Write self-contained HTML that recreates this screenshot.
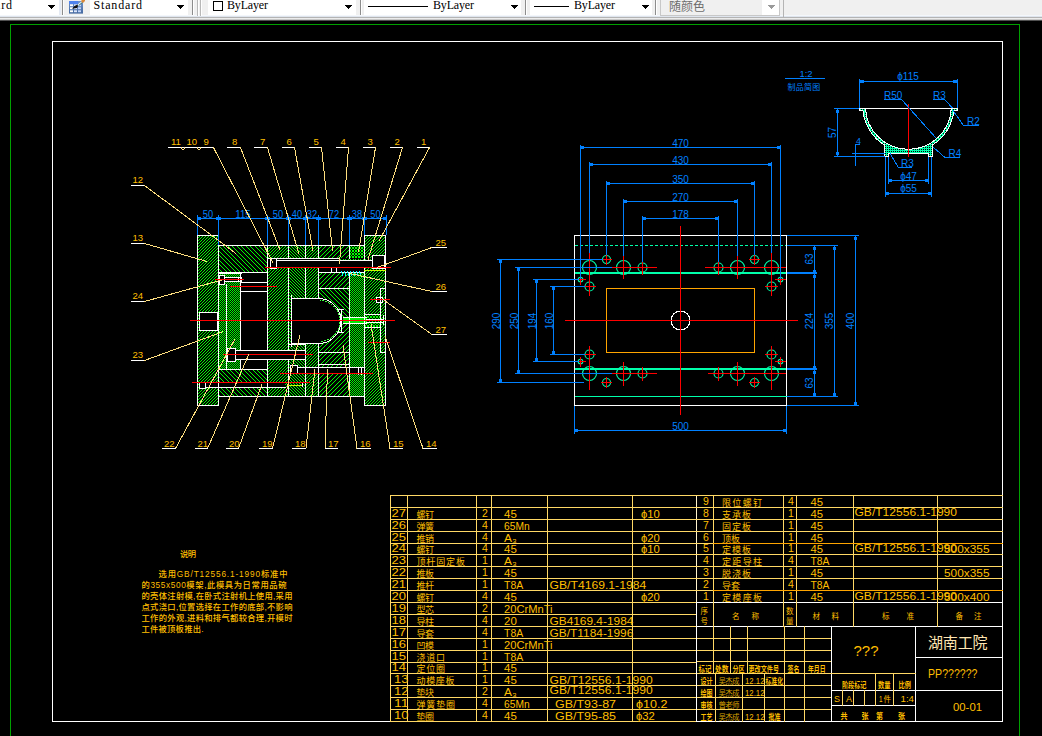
<!DOCTYPE html>
<html><head><meta charset="utf-8"><title>CAD</title>
<style>html,body{margin:0;padding:0;background:#000;overflow:hidden}svg{display:block}text{white-space:pre}</style>
</head><body>
<svg width="1042" height="736" viewBox="0 0 1042 736" shape-rendering="crispEdges">
<rect x="0" y="0" width="1042" height="736" fill="#000"/>
<defs>
<clipPath id="cavclip"><path d="M318 272 H349.5 V396 H318 V343.5 A22.5 22.5 0 0 0 318 298.5 Z"/></clipPath>
<clipPath id="bowlclip"><path id="bowlshape" d="M859.5 108.5 H865.5 A43 43 0 0 0 908.4 149.3 A43 43 0 0 0 951.3 108.5 H957.5 V110.5 H953.8 A45.6 45.6 0 0 1 932 145.3 V156.5 H928 V153.8 H888.8 V156.5 H884.8 V145.3 A45.6 45.6 0 0 1 863 110.5 H859.5 Z"/></clipPath>
<pattern id="F3" patternUnits="userSpaceOnUse" x="0" y="0" width="3" height="3"><rect x="0" y="0" width="1" height="1" fill="#00ff00"/><rect x="1" y="2" width="1" height="1" fill="#00ff00"/><rect x="2" y="1" width="1" height="1" fill="#00ff00"/></pattern>
<pattern id="B3" patternUnits="userSpaceOnUse" x="0" y="0" width="3" height="3"><rect x="0" y="0" width="1" height="1" fill="#00ff00"/><rect x="1" y="1" width="1" height="1" fill="#00ff00"/><rect x="2" y="2" width="1" height="1" fill="#00ff00"/></pattern>
<pattern id="F45" patternUnits="userSpaceOnUse" x="0" y="0" width="9" height="9"><rect x="0" y="0" width="1" height="1" fill="#00ff00"/><rect x="0" y="4" width="1" height="1" fill="#00ff00"/><rect x="1" y="3" width="1" height="1" fill="#00ff00"/><rect x="1" y="8" width="1" height="1" fill="#00ff00"/><rect x="2" y="2" width="1" height="1" fill="#00ff00"/><rect x="2" y="7" width="1" height="1" fill="#00ff00"/><rect x="3" y="1" width="1" height="1" fill="#00ff00"/><rect x="3" y="6" width="1" height="1" fill="#00ff00"/><rect x="4" y="0" width="1" height="1" fill="#00ff00"/><rect x="4" y="5" width="1" height="1" fill="#00ff00"/><rect x="5" y="4" width="1" height="1" fill="#00ff00"/><rect x="5" y="8" width="1" height="1" fill="#00ff00"/><rect x="6" y="3" width="1" height="1" fill="#00ff00"/><rect x="6" y="7" width="1" height="1" fill="#00ff00"/><rect x="7" y="2" width="1" height="1" fill="#00ff00"/><rect x="7" y="6" width="1" height="1" fill="#00ff00"/><rect x="8" y="1" width="1" height="1" fill="#00ff00"/><rect x="8" y="5" width="1" height="1" fill="#00ff00"/></pattern>
<pattern id="B45" patternUnits="userSpaceOnUse" x="0" y="0" width="9" height="9"><rect x="0" y="0" width="1" height="1" fill="#00ff00"/><rect x="0" y="5" width="1" height="1" fill="#00ff00"/><rect x="1" y="1" width="1" height="1" fill="#00ff00"/><rect x="1" y="6" width="1" height="1" fill="#00ff00"/><rect x="2" y="2" width="1" height="1" fill="#00ff00"/><rect x="2" y="7" width="1" height="1" fill="#00ff00"/><rect x="3" y="3" width="1" height="1" fill="#00ff00"/><rect x="3" y="8" width="1" height="1" fill="#00ff00"/><rect x="4" y="0" width="1" height="1" fill="#00ff00"/><rect x="4" y="4" width="1" height="1" fill="#00ff00"/><rect x="5" y="1" width="1" height="1" fill="#00ff00"/><rect x="5" y="5" width="1" height="1" fill="#00ff00"/><rect x="6" y="2" width="1" height="1" fill="#00ff00"/><rect x="6" y="6" width="1" height="1" fill="#00ff00"/><rect x="7" y="3" width="1" height="1" fill="#00ff00"/><rect x="7" y="7" width="1" height="1" fill="#00ff00"/><rect x="8" y="4" width="1" height="1" fill="#00ff00"/><rect x="8" y="8" width="1" height="1" fill="#00ff00"/></pattern>
<pattern id="CH" patternUnits="userSpaceOnUse" x="0" y="0" width="2" height="2"><rect x="0" y="0" width="1" height="1" fill="#00ff00"/><rect x="1" y="1" width="1" height="1" fill="#00ff00"/></pattern>
<pattern id="X3" patternUnits="userSpaceOnUse" x="0" y="0" width="3" height="3"><rect x="0" y="0" width="1" height="1" fill="#00ff00"/><rect x="1" y="1" width="1" height="1" fill="#00ff00"/><rect x="1" y="2" width="1" height="1" fill="#00ff00"/><rect x="2" y="1" width="1" height="1" fill="#00ff00"/><rect x="2" y="2" width="1" height="1" fill="#00ff00"/></pattern>
<pattern id="CHB" patternUnits="userSpaceOnUse" x="0" y="0" width="10" height="10"><rect x="0" y="0" width="1" height="1" fill="#00ff00"/><rect x="0" y="2" width="1" height="1" fill="#00ff00"/><rect x="0" y="4" width="1" height="1" fill="#00ff00"/><rect x="0" y="6" width="1" height="1" fill="#00ff00"/><rect x="0" y="8" width="1" height="1" fill="#00ff00"/><rect x="0" y="9" width="1" height="1" fill="#00ff00"/><rect x="1" y="0" width="1" height="1" fill="#00ff00"/><rect x="1" y="1" width="1" height="1" fill="#00ff00"/><rect x="1" y="3" width="1" height="1" fill="#00ff00"/><rect x="1" y="5" width="1" height="1" fill="#00ff00"/><rect x="1" y="7" width="1" height="1" fill="#00ff00"/><rect x="1" y="9" width="1" height="1" fill="#00ff00"/><rect x="2" y="0" width="1" height="1" fill="#00ff00"/><rect x="2" y="1" width="1" height="1" fill="#00ff00"/><rect x="2" y="2" width="1" height="1" fill="#00ff00"/><rect x="2" y="4" width="1" height="1" fill="#00ff00"/><rect x="2" y="6" width="1" height="1" fill="#00ff00"/><rect x="2" y="8" width="1" height="1" fill="#00ff00"/><rect x="3" y="1" width="1" height="1" fill="#00ff00"/><rect x="3" y="2" width="1" height="1" fill="#00ff00"/><rect x="3" y="3" width="1" height="1" fill="#00ff00"/><rect x="3" y="5" width="1" height="1" fill="#00ff00"/><rect x="3" y="7" width="1" height="1" fill="#00ff00"/><rect x="3" y="9" width="1" height="1" fill="#00ff00"/><rect x="4" y="0" width="1" height="1" fill="#00ff00"/><rect x="4" y="2" width="1" height="1" fill="#00ff00"/><rect x="4" y="3" width="1" height="1" fill="#00ff00"/><rect x="4" y="4" width="1" height="1" fill="#00ff00"/><rect x="4" y="6" width="1" height="1" fill="#00ff00"/><rect x="4" y="8" width="1" height="1" fill="#00ff00"/><rect x="5" y="1" width="1" height="1" fill="#00ff00"/><rect x="5" y="3" width="1" height="1" fill="#00ff00"/><rect x="5" y="4" width="1" height="1" fill="#00ff00"/><rect x="5" y="5" width="1" height="1" fill="#00ff00"/><rect x="5" y="7" width="1" height="1" fill="#00ff00"/><rect x="5" y="9" width="1" height="1" fill="#00ff00"/><rect x="6" y="0" width="1" height="1" fill="#00ff00"/><rect x="6" y="2" width="1" height="1" fill="#00ff00"/><rect x="6" y="4" width="1" height="1" fill="#00ff00"/><rect x="6" y="5" width="1" height="1" fill="#00ff00"/><rect x="6" y="6" width="1" height="1" fill="#00ff00"/><rect x="6" y="8" width="1" height="1" fill="#00ff00"/><rect x="7" y="1" width="1" height="1" fill="#00ff00"/><rect x="7" y="3" width="1" height="1" fill="#00ff00"/><rect x="7" y="5" width="1" height="1" fill="#00ff00"/><rect x="7" y="6" width="1" height="1" fill="#00ff00"/><rect x="7" y="7" width="1" height="1" fill="#00ff00"/><rect x="7" y="9" width="1" height="1" fill="#00ff00"/><rect x="8" y="0" width="1" height="1" fill="#00ff00"/><rect x="8" y="2" width="1" height="1" fill="#00ff00"/><rect x="8" y="4" width="1" height="1" fill="#00ff00"/><rect x="8" y="6" width="1" height="1" fill="#00ff00"/><rect x="8" y="7" width="1" height="1" fill="#00ff00"/><rect x="8" y="8" width="1" height="1" fill="#00ff00"/><rect x="9" y="1" width="1" height="1" fill="#00ff00"/><rect x="9" y="3" width="1" height="1" fill="#00ff00"/><rect x="9" y="5" width="1" height="1" fill="#00ff00"/><rect x="9" y="7" width="1" height="1" fill="#00ff00"/><rect x="9" y="8" width="1" height="1" fill="#00ff00"/><rect x="9" y="9" width="1" height="1" fill="#00ff00"/></pattern>
<pattern id="CHF" patternUnits="userSpaceOnUse" x="0" y="0" width="10" height="10"><rect x="0" y="0" width="1" height="1" fill="#00ff00"/><rect x="0" y="1" width="1" height="1" fill="#00ff00"/><rect x="0" y="2" width="1" height="1" fill="#00ff00"/><rect x="0" y="4" width="1" height="1" fill="#00ff00"/><rect x="0" y="6" width="1" height="1" fill="#00ff00"/><rect x="0" y="8" width="1" height="1" fill="#00ff00"/><rect x="1" y="0" width="1" height="1" fill="#00ff00"/><rect x="1" y="1" width="1" height="1" fill="#00ff00"/><rect x="1" y="3" width="1" height="1" fill="#00ff00"/><rect x="1" y="5" width="1" height="1" fill="#00ff00"/><rect x="1" y="7" width="1" height="1" fill="#00ff00"/><rect x="1" y="9" width="1" height="1" fill="#00ff00"/><rect x="2" y="0" width="1" height="1" fill="#00ff00"/><rect x="2" y="2" width="1" height="1" fill="#00ff00"/><rect x="2" y="4" width="1" height="1" fill="#00ff00"/><rect x="2" y="6" width="1" height="1" fill="#00ff00"/><rect x="2" y="8" width="1" height="1" fill="#00ff00"/><rect x="2" y="9" width="1" height="1" fill="#00ff00"/><rect x="3" y="1" width="1" height="1" fill="#00ff00"/><rect x="3" y="3" width="1" height="1" fill="#00ff00"/><rect x="3" y="5" width="1" height="1" fill="#00ff00"/><rect x="3" y="7" width="1" height="1" fill="#00ff00"/><rect x="3" y="8" width="1" height="1" fill="#00ff00"/><rect x="3" y="9" width="1" height="1" fill="#00ff00"/><rect x="4" y="0" width="1" height="1" fill="#00ff00"/><rect x="4" y="2" width="1" height="1" fill="#00ff00"/><rect x="4" y="4" width="1" height="1" fill="#00ff00"/><rect x="4" y="6" width="1" height="1" fill="#00ff00"/><rect x="4" y="7" width="1" height="1" fill="#00ff00"/><rect x="4" y="8" width="1" height="1" fill="#00ff00"/><rect x="5" y="1" width="1" height="1" fill="#00ff00"/><rect x="5" y="3" width="1" height="1" fill="#00ff00"/><rect x="5" y="5" width="1" height="1" fill="#00ff00"/><rect x="5" y="6" width="1" height="1" fill="#00ff00"/><rect x="5" y="7" width="1" height="1" fill="#00ff00"/><rect x="5" y="9" width="1" height="1" fill="#00ff00"/><rect x="6" y="0" width="1" height="1" fill="#00ff00"/><rect x="6" y="2" width="1" height="1" fill="#00ff00"/><rect x="6" y="4" width="1" height="1" fill="#00ff00"/><rect x="6" y="5" width="1" height="1" fill="#00ff00"/><rect x="6" y="6" width="1" height="1" fill="#00ff00"/><rect x="6" y="8" width="1" height="1" fill="#00ff00"/><rect x="7" y="1" width="1" height="1" fill="#00ff00"/><rect x="7" y="3" width="1" height="1" fill="#00ff00"/><rect x="7" y="4" width="1" height="1" fill="#00ff00"/><rect x="7" y="5" width="1" height="1" fill="#00ff00"/><rect x="7" y="7" width="1" height="1" fill="#00ff00"/><rect x="7" y="9" width="1" height="1" fill="#00ff00"/><rect x="8" y="0" width="1" height="1" fill="#00ff00"/><rect x="8" y="2" width="1" height="1" fill="#00ff00"/><rect x="8" y="3" width="1" height="1" fill="#00ff00"/><rect x="8" y="4" width="1" height="1" fill="#00ff00"/><rect x="8" y="6" width="1" height="1" fill="#00ff00"/><rect x="8" y="8" width="1" height="1" fill="#00ff00"/><rect x="9" y="1" width="1" height="1" fill="#00ff00"/><rect x="9" y="2" width="1" height="1" fill="#00ff00"/><rect x="9" y="3" width="1" height="1" fill="#00ff00"/><rect x="9" y="5" width="1" height="1" fill="#00ff00"/><rect x="9" y="7" width="1" height="1" fill="#00ff00"/><rect x="9" y="9" width="1" height="1" fill="#00ff00"/></pattern>
<pattern id="BOWL" patternUnits="userSpaceOnUse" x="0" y="0" width="2" height="2"><rect x="0" y="0" width="1" height="1" fill="#00ffaa"/><rect x="1" y="0" width="1" height="1" fill="#00ffaa"/><rect x="0" y="1" width="1" height="1" fill="#00ffaa"/></pattern>
</defs>
<g id="toolbar" shape-rendering="crispEdges">
<rect x="0" y="0" width="1042" height="21" fill="#f0f0f0"/>
<rect x="0" y="15" width="1042" height="1" fill="#f4f7fb"/>
<rect x="0" y="16" width="1042" height="1" fill="#dfe5ee"/>
<rect x="0" y="17" width="1042" height="1" fill="#b4b4b4"/>
<rect x="0" y="18" width="1042" height="1" fill="#ececec"/>
<rect x="0" y="19" width="1042" height="1" fill="#c8c8c8"/>
<rect x="0" y="20" width="1042" height="1" fill="#505050"/>
<rect x="0" y="0" width="59" height="15" fill="#ffffff"/>
<rect x="90" y="0" width="98" height="15" fill="#ffffff"/>
<rect x="208" y="0" width="148" height="15" fill="#ffffff"/>
<rect x="364" y="0" width="157" height="15" fill="#ffffff"/>
<rect x="530" y="0" width="122" height="15" fill="#ffffff"/>
<rect x="59" y="0" width="2" height="15" fill="#e4eaf4"/>
<rect x="62" y="0" width="1" height="15" fill="#8c8c8c"/>
<rect x="63" y="0" width="1" height="15" fill="#ffffff"/>
<rect x="192" y="0" width="1" height="15" fill="#8c8c8c"/>
<rect x="193" y="0" width="1" height="15" fill="#ffffff"/>
<rect x="360" y="0" width="1" height="15" fill="#8c8c8c"/>
<rect x="361" y="0" width="1" height="15" fill="#ffffff"/>
<rect x="525" y="0" width="1" height="15" fill="#8c8c8c"/>
<rect x="526" y="0" width="1" height="15" fill="#ffffff"/>
<rect x="655" y="0" width="1" height="15" fill="#8c8c8c"/>
<rect x="656" y="0" width="1" height="15" fill="#ffffff"/>
<rect x="197" y="0" width="1" height="16" fill="#b8b8b8"/>
<rect x="198" y="0" width="1" height="16" fill="#ffffff"/>
<rect x="200" y="0" width="1" height="16" fill="#b8b8b8"/>
<rect x="201" y="0" width="1" height="16" fill="#ffffff"/>
<rect x="660" y="0" width="120" height="16" fill="#ffffff"/>
<rect x="661" y="0" width="101" height="15" fill="#f0f0f0"/>
<rect x="660" y="15" width="120" height="1" fill="#c8c8c8"/>
<rect x="660" y="0" width="1" height="16" fill="#c8c8c8"/>
<rect x="779" y="0" width="1" height="16" fill="#c8c8c8"/>
<rect x="783" y="0" width="1" height="18" fill="#b4b4b4"/>
<path d="M48 5 h7 l-3.5 4 z" fill="#000"/>
<path d="M177 5 h7 l-3.5 4 z" fill="#000"/>
<path d="M345 5 h7 l-3.5 4 z" fill="#000"/>
<path d="M511 5 h7 l-3.5 4 z" fill="#000"/>
<path d="M642 5 h7 l-3.5 4 z" fill="#000"/>
<path d="M768 5 h7 l-3.5 4 z" fill="#9a9a9a"/>
<text x="-36.5" y="9" fill="#000" font-size="12" font-family='"Liberation Serif","Noto Serif CJK SC",serif' text-anchor="start" textLength="48.5" lengthAdjust="spacing">Standard</text>
<text x="93.5" y="9" fill="#000" font-size="12" font-family='"Liberation Serif","Noto Serif CJK SC",serif' text-anchor="start" textLength="48.5" lengthAdjust="spacing">Standard</text>
<rect x="213.5" y="1.5" width="9" height="9" fill="#fff" stroke="#000" stroke-width="1"/>
<text x="227" y="9" fill="#000" font-size="12" font-family='"Liberation Serif","Noto Serif CJK SC",serif' text-anchor="start" textLength="41" lengthAdjust="spacing">ByLayer</text>
<text x="433" y="9" fill="#000" font-size="12" font-family='"Liberation Serif","Noto Serif CJK SC",serif' text-anchor="start" textLength="41" lengthAdjust="spacing">ByLayer</text>
<text x="574" y="9" fill="#000" font-size="12" font-family='"Liberation Serif","Noto Serif CJK SC",serif' text-anchor="start" textLength="41" lengthAdjust="spacing">ByLayer</text>
<line x1="368" y1="6.5" x2="428" y2="6.5" stroke="#000" stroke-width="1" />
<line x1="534" y1="6.5" x2="569" y2="6.5" stroke="#000" stroke-width="1" />
<text x="669" y="11" fill="#6d6d6d" font-size="12" font-family='"Liberation Sans","Noto Sans CJK SC",sans-serif' text-anchor="start" >随颜色</text>
<g shape-rendering="auto">
<defs><linearGradient id="icg" x1="0" y1="0" x2="0" y2="1"><stop offset="0" stop-color="#6d93cf"/><stop offset="1" stop-color="#44689f"/></linearGradient></defs>
<rect x="69" y="1" width="14" height="12.6" fill="url(#icg)"/>
<rect x="69" y="1" width="9" height="3" fill="#4f83ee"/>
<rect x="70" y="4.3" width="3" height="1.9" fill="#ffffff"/>
<rect x="74" y="4.3" width="3" height="1.9" fill="#dbe6fb"/>
<rect x="78" y="4.3" width="3" height="1.9" fill="#c3d5fa"/>
<rect x="70" y="7.3" width="3" height="1.9" fill="#ffffff"/>
<rect x="74" y="7.3" width="3" height="1.9" fill="#dbe6fb"/>
<rect x="78" y="7.3" width="3" height="1.9" fill="#c3d5fa"/>
<rect x="70" y="10.3" width="3" height="1.9" fill="#ffffff"/>
<rect x="74" y="10.3" width="3" height="1.9" fill="#dbe6fb"/>
<rect x="78" y="10.3" width="3" height="1.9" fill="#c3d5fa"/>
<path d="M72 8.8 L74.5 6 L77.5 4.6 L78.2 5.8 L77 8 Z" fill="#111"/>
<path d="M77.3 4.8 L81.5 1.3 L82.5 2.3 L78.2 5.8 Z" fill="#e8f0f0"/>
<path d="M78.5 5.2 L82.3 2 L82.8 2.6 L79 5.8 Z" fill="#2f6f66"/>
<path d="M81 1.2 L82.5 -1 L85 -1 L85 1 L83 3 Z" fill="#d9893a"/>
</g>
</g>
<line x1="10" y1="24.5" x2="1020" y2="24.5" stroke="#00a000" stroke-width="1" />
<line x1="10.5" y1="24" x2="10.5" y2="737" stroke="#00a000" stroke-width="1" />
<line x1="1019.5" y1="24" x2="1019.5" y2="737" stroke="#00a000" stroke-width="1" />
<rect x="52.5" y="41.5" width="950" height="680" fill="none" stroke="#ffffff" stroke-width="1"/>
<g id="section">
<rect x="197" y="235" width="21" height="170" fill="url(#F3)"/>
<rect x="218" y="245" width="49" height="27" fill="url(#B45)"/>
<rect x="218" y="369" width="49" height="27" fill="url(#B45)"/>
<rect x="218" y="273" width="8" height="96" fill="url(#CH)"/>
<rect x="226" y="273" width="14" height="96" fill="url(#CH)"/>
<rect x="267" y="245" width="21" height="151" fill="url(#F3)"/>
<rect x="288" y="245" width="17" height="151" fill="url(#B3)"/>
<rect x="305" y="245" width="13" height="151" fill="url(#F3)"/>
<rect x="318" y="245" width="31" height="13" fill="url(#F45)"/>
<rect x="318" y="272" width="31" height="16" fill="url(#F45)" clip-path="url(#cavclip)"/>
<rect x="318" y="288" width="31" height="32" fill="url(#B45)" clip-path="url(#cavclip)"/>
<rect x="318" y="320" width="31" height="76" fill="url(#F45)" clip-path="url(#cavclip)"/>
<rect x="349" y="245" width="15" height="13" fill="url(#X3)"/>
<rect x="349" y="272" width="15" height="124" fill="url(#CH)"/>
<rect x="364" y="235" width="21" height="170" fill="url(#F3)"/>
<rect x="199" y="312" width="18" height="19" fill="#000"/>
<rect x="240" y="273" width="27" height="96" fill="#000"/>
<rect x="291" y="298" width="27" height="46" fill="#000"/>
<rect x="276" y="258" width="96" height="10" fill="#000"/>
<rect x="318" y="268" width="46" height="4" fill="#000"/>
<rect x="268" y="258" width="8" height="10" fill="#000"/>
<rect x="372" y="256" width="12" height="13" fill="#000"/>
<rect x="227" y="350" width="78" height="10" fill="#000"/>
<rect x="297" y="367" width="67" height="7" fill="#000"/>
<rect x="290" y="365" width="7" height="9" fill="#000"/>
<rect x="205" y="383" width="80" height="4" fill="#000"/>
<rect x="199" y="383" width="6" height="5" fill="#000"/>
<rect x="224" y="277" width="17" height="5" fill="#000"/>
<rect x="219" y="275" width="5" height="9" fill="#000"/>
<rect x="376" y="297" width="6" height="5" fill="#000"/>
<rect x="343" y="318" width="23" height="5" fill="#00e800"/>
<rect x="364" y="261" width="1" height="6" fill="#000"/>
<rect x="365" y="314" width="15" height="14" fill="url(#X3)"/>
<rect x="197.5" y="235.5" width="21" height="170" fill="none" stroke="#ffffff" stroke-width="1"/>
<rect x="364.5" y="235.5" width="21" height="170" fill="none" stroke="#ffffff" stroke-width="1"/>
<line x1="218" y1="245.5" x2="365" y2="245.5" stroke="#ffffff" stroke-width="1" />
<line x1="218" y1="396.5" x2="365" y2="396.5" stroke="#ffffff" stroke-width="1" />
<line x1="267.5" y1="245" x2="267.5" y2="259" stroke="#ffffff" stroke-width="1" />
<line x1="288.5" y1="245" x2="288.5" y2="259" stroke="#ffffff" stroke-width="1" />
<line x1="305.5" y1="245" x2="305.5" y2="259" stroke="#ffffff" stroke-width="1" />
<line x1="318.5" y1="245" x2="318.5" y2="259" stroke="#ffffff" stroke-width="1" />
<line x1="349.5" y1="245" x2="349.5" y2="259" stroke="#ffffff" stroke-width="1" />
<line x1="267.5" y1="245" x2="267.5" y2="397" stroke="#ffffff" stroke-width="1" />
<line x1="288.5" y1="268" x2="288.5" y2="397" stroke="#ffffff" stroke-width="1" />
<line x1="305.5" y1="268" x2="305.5" y2="299" stroke="#ffffff" stroke-width="1" />
<line x1="305.5" y1="344" x2="305.5" y2="397" stroke="#ffffff" stroke-width="1" />
<line x1="318.5" y1="268" x2="318.5" y2="299" stroke="#ffffff" stroke-width="1" />
<line x1="318.5" y1="344" x2="318.5" y2="397" stroke="#ffffff" stroke-width="1" />
<line x1="349.5" y1="272" x2="349.5" y2="397" stroke="#ffffff" stroke-width="1" />
<line x1="218" y1="272.5" x2="268" y2="272.5" stroke="#ffffff" stroke-width="1" />
<line x1="218" y1="369.5" x2="268" y2="369.5" stroke="#ffffff" stroke-width="1" />
<rect x="199.5" y="312.5" width="18" height="18" fill="none" stroke="#ffffff" stroke-width="1"/>
<line x1="226.5" y1="284" x2="226.5" y2="370" stroke="#ffffff" stroke-width="1" />
<line x1="240.5" y1="272" x2="240.5" y2="370" stroke="#ffffff" stroke-width="1" />
<line x1="219" y1="273.5" x2="242" y2="273.5" stroke="#ffffff" stroke-width="1" />
<rect x="219.5" y="275.5" width="5" height="9" fill="none" stroke="#ffffff" stroke-width="1"/>
<rect x="224.5" y="277.5" width="14" height="4" fill="none" stroke="#ffffff" stroke-width="1"/>
<rect x="238.5" y="277.5" width="3" height="4" fill="none" stroke="#ffffff" stroke-width="1"/>
<line x1="241" y1="282.5" x2="268" y2="282.5" stroke="#ffffff" stroke-width="1" />
<line x1="241" y1="291.5" x2="268" y2="291.5" stroke="#ffffff" stroke-width="1" />
<rect x="227.5" y="348.5" width="8" height="13" fill="#000" stroke="#ffffff" stroke-width="1"/>
<line x1="235" y1="350.5" x2="306" y2="350.5" stroke="#ffffff" stroke-width="1" />
<line x1="235" y1="359.5" x2="306" y2="359.5" stroke="#ffffff" stroke-width="1" />
<line x1="305.5" y1="350" x2="305.5" y2="360" stroke="#ffffff" stroke-width="1" />
<line x1="267" y1="258.5" x2="339" y2="258.5" stroke="#ffffff" stroke-width="1" />
<line x1="276" y1="260.5" x2="373" y2="260.5" stroke="#ffffff" stroke-width="1" />
<rect x="270.5" y="258.5" width="6" height="10" fill="none" stroke="#ffffff" stroke-width="1"/>
<line x1="340" y1="259.5" x2="372" y2="259.5" stroke="#00ff00" stroke-dasharray="1 1.5"/>
<line x1="318" y1="272.5" x2="365" y2="272.5" stroke="#ffffff" stroke-width="1" />
<line x1="331.5" y1="268" x2="331.5" y2="273" stroke="#ffffff" stroke-width="1" />
<line x1="336.5" y1="268" x2="336.5" y2="273" stroke="#ffffff" stroke-width="1" />
<rect x="372.5" y="255.5" width="12" height="13" fill="none" stroke="#ffffff" stroke-width="1"/>
<line x1="291.5" y1="295" x2="291.5" y2="347" stroke="#ffffff" stroke-width="1" />
<line x1="291" y1="298.5" x2="319" y2="298.5" stroke="#ffffff" stroke-width="1" />
<line x1="291" y1="343.5" x2="319" y2="343.5" stroke="#ffffff" stroke-width="1" />
<path d="M318.5 298.5 A22.5 22.5 0 0 1 318.5 343.5" fill="none" stroke="#fff"/>
<path d="M319.5 300.5 A20.5 20.5 0 0 1 319.5 341.5" fill="none" stroke="#40ff40" stroke-dasharray="2 1"/>
<line x1="338" y1="309.5" x2="344" y2="309.5" stroke="#ffffff" stroke-width="1" />
<line x1="341.5" y1="309" x2="341.5" y2="333" stroke="#ffffff" stroke-width="1" />
<line x1="338" y1="332.5" x2="344" y2="332.5" stroke="#ffffff" stroke-width="1" />
<line x1="318" y1="288.5" x2="350" y2="288.5" stroke="#ffffff" stroke-width="1" />
<line x1="318" y1="352.5" x2="350" y2="352.5" stroke="#ffffff" stroke-width="1" />
<line x1="318" y1="364.5" x2="350" y2="364.5" stroke="#ffffff" stroke-width="1" />
<line x1="288" y1="344.5" x2="306" y2="344.5" stroke="#ffffff" stroke-width="1" />
<rect x="290.5" y="365.5" width="7" height="8" fill="none" stroke="#ffffff" stroke-width="1"/>
<line x1="297" y1="367.5" x2="365" y2="367.5" stroke="#ffffff" stroke-width="1" />
<line x1="358.5" y1="367" x2="358.5" y2="375" stroke="#ffffff" stroke-width="1" />
<line x1="361.5" y1="367" x2="361.5" y2="375" stroke="#ffffff" stroke-width="1" />
<rect x="199.5" y="382.5" width="6" height="6" fill="none" stroke="#ffffff" stroke-width="1"/>
<line x1="205" y1="387.5" x2="286" y2="387.5" stroke="#ffffff" stroke-width="1" />
<line x1="287" y1="385.5" x2="302" y2="385.5" stroke="#c8ff00" stroke-width="1" />
<line x1="290" y1="385.5" x2="303" y2="385.5" stroke="#c8ff00" stroke-width="1" />
<line x1="302.5" y1="382" x2="302.5" y2="387" stroke="#ffffff" stroke-width="1" />
<line x1="343" y1="317.5" x2="367" y2="317.5" stroke="#ffffff" stroke-width="1" />
<line x1="343" y1="323.5" x2="367" y2="323.5" stroke="#ffffff" stroke-width="1" />
<line x1="366" y1="319.5" x2="384" y2="319.5" stroke="#ffffff" stroke-width="1" />
<line x1="366" y1="322.5" x2="384" y2="322.5" stroke="#ffffff" stroke-width="1" />
<line x1="365" y1="314.5" x2="381" y2="314.5" stroke="#ffffff" stroke-width="1" />
<line x1="365" y1="327.5" x2="381" y2="327.5" stroke="#ffffff" stroke-width="1" />
<line x1="380.5" y1="288" x2="380.5" y2="353" stroke="#ffffff" stroke-width="1" />
<line x1="380" y1="288.5" x2="386" y2="288.5" stroke="#ffffff" stroke-width="1" />
<line x1="380" y1="352.5" x2="386" y2="352.5" stroke="#ffffff" stroke-width="1" />
<line x1="383.5" y1="315" x2="383.5" y2="325" stroke="#ffffff" stroke-width="1" />
<rect x="376.5" y="297.5" width="6" height="5" fill="none" stroke="#ffffff" stroke-width="1"/>
<line x1="364" y1="270.5" x2="386" y2="270.5" stroke="#c8ff00" stroke-width="1" />
<line x1="341.5" y1="271" x2="343" y2="276" stroke="#00ffff" stroke-width="1" />
<line x1="344.5" y1="271" x2="346" y2="276" stroke="#00ffff" stroke-width="1" />
<line x1="347.5" y1="271" x2="349" y2="276" stroke="#00ffff" stroke-width="1" />
<line x1="350.5" y1="271" x2="352" y2="276" stroke="#00ffff" stroke-width="1" />
<line x1="353.5" y1="271" x2="355" y2="276" stroke="#00ffff" stroke-width="1" />
<line x1="356.5" y1="271" x2="358" y2="276" stroke="#00ffff" stroke-width="1" />
<line x1="359.5" y1="271" x2="361" y2="276" stroke="#00ffff" stroke-width="1" />
<rect x="364" y="261" width="1" height="6" fill="#000"/>
<rect x="240" y="351" width="1" height="8" fill="#000"/>
<rect x="267" y="351" width="1" height="8" fill="#000"/>
<rect x="288" y="351" width="1" height="8" fill="#000"/>
<line x1="190" y1="320.5" x2="395" y2="320.5" stroke="#ff0000" stroke-width="1" />
<line x1="265" y1="267.5" x2="391" y2="267.5" stroke="#ff0000" stroke-width="1" />
<line x1="215" y1="279.5" x2="244" y2="279.5" stroke="#ff0000" stroke-width="1" />
<line x1="230" y1="286.5" x2="277" y2="286.5" stroke="#ff0000" stroke-width="1" />
<line x1="370" y1="299.5" x2="390" y2="299.5" stroke="#ff0000" stroke-width="1" />
<line x1="223" y1="354.5" x2="313" y2="354.5" stroke="#ff0000" stroke-width="1" />
<line x1="280" y1="373.5" x2="373" y2="373.5" stroke="#ff0000" stroke-width="1" />
<line x1="192" y1="382.5" x2="310" y2="382.5" stroke="#ff0000" stroke-width="1" />
<line x1="368" y1="342.5" x2="390" y2="342.5" stroke="#ff0000" stroke-width="1" />
<line x1="197" y1="218.5" x2="387" y2="218.5" stroke="#0080ff" stroke-width="1" />
<line x1="197.5" y1="215" x2="197.5" y2="235" stroke="#0080ff" stroke-width="1" />
<line x1="218.5" y1="215" x2="218.5" y2="245" stroke="#0080ff" stroke-width="1" />
<line x1="267.5" y1="215" x2="267.5" y2="245" stroke="#0080ff" stroke-width="1" />
<line x1="288.5" y1="215" x2="288.5" y2="245" stroke="#0080ff" stroke-width="1" />
<line x1="305.5" y1="215" x2="305.5" y2="245" stroke="#0080ff" stroke-width="1" />
<line x1="318.5" y1="215" x2="318.5" y2="245" stroke="#0080ff" stroke-width="1" />
<line x1="349.5" y1="215" x2="349.5" y2="245" stroke="#0080ff" stroke-width="1" />
<line x1="364.5" y1="215" x2="364.5" y2="235" stroke="#0080ff" stroke-width="1" />
<line x1="386.5" y1="215" x2="386.5" y2="235" stroke="#0080ff" stroke-width="1" />
<rect x="216" y="217" width="5" height="3" fill="#0080ff"/>
<rect x="265" y="217" width="5" height="3" fill="#0080ff"/>
<rect x="286" y="217" width="5" height="3" fill="#0080ff"/>
<rect x="303" y="217" width="5" height="3" fill="#0080ff"/>
<rect x="316" y="217" width="5" height="3" fill="#0080ff"/>
<rect x="347" y="217" width="5" height="3" fill="#0080ff"/>
<rect x="362" y="217" width="5" height="3" fill="#0080ff"/>
<rect x="198" y="217" width="3" height="3" fill="#0080ff"/>
<rect x="383" y="217" width="3" height="3" fill="#0080ff"/>
<text x="208" y="217.5" fill="#0080ff" font-size="10" font-family='"Liberation Sans","Noto Sans CJK SC",sans-serif' text-anchor="middle" textLength="10.3" lengthAdjust="spacingAndGlyphs">50</text>
<text x="243" y="217.5" fill="#0080ff" font-size="10" font-family='"Liberation Sans","Noto Sans CJK SC",sans-serif' text-anchor="middle" textLength="15.700000000000003" lengthAdjust="spacingAndGlyphs">115</text>
<text x="278" y="217.5" fill="#0080ff" font-size="10" font-family='"Liberation Sans","Noto Sans CJK SC",sans-serif' text-anchor="middle" textLength="10.3" lengthAdjust="spacingAndGlyphs">50</text>
<text x="297" y="217.5" fill="#0080ff" font-size="10" font-family='"Liberation Sans","Noto Sans CJK SC",sans-serif' text-anchor="middle" textLength="10.3" lengthAdjust="spacingAndGlyphs">40</text>
<text x="312" y="217.5" fill="#0080ff" font-size="10" font-family='"Liberation Sans","Noto Sans CJK SC",sans-serif' text-anchor="middle" textLength="10.3" lengthAdjust="spacingAndGlyphs">32</text>
<text x="334" y="217.5" fill="#0080ff" font-size="10" font-family='"Liberation Sans","Noto Sans CJK SC",sans-serif' text-anchor="middle" textLength="10.3" lengthAdjust="spacingAndGlyphs">72</text>
<text x="357" y="217.5" fill="#0080ff" font-size="10" font-family='"Liberation Sans","Noto Sans CJK SC",sans-serif' text-anchor="middle" textLength="10.3" lengthAdjust="spacingAndGlyphs">38</text>
<text x="375.5" y="217.5" fill="#0080ff" font-size="10" font-family='"Liberation Sans","Noto Sans CJK SC",sans-serif' text-anchor="middle" textLength="10.3" lengthAdjust="spacingAndGlyphs">50</text>
<line x1="168" y1="147.5" x2="214" y2="147.5" stroke="#ffffff" stroke-width="1" />
<path d="M181 147.5 l2 2.5 l2 -2.5 M197 147.5 l2 2.5 l2 -2.5" stroke="#ffdf7f" fill="none"/>
<text x="171" y="145" fill="#ffbf00" font-size="9.6" font-family='"Liberation Sans","Noto Sans CJK SC",sans-serif' text-anchor="start" >11</text>
<text x="186.5" y="145" fill="#ffbf00" font-size="9.6" font-family='"Liberation Sans","Noto Sans CJK SC",sans-serif' text-anchor="start" >10</text>
<text x="203.5" y="145" fill="#ffbf00" font-size="9.6" font-family='"Liberation Sans","Noto Sans CJK SC",sans-serif' text-anchor="start" >9</text>
<line x1="213.5" y1="147.5" x2="273" y2="263" stroke="#ffdf7f" stroke-width="1" />
<line x1="227" y1="147.5" x2="241" y2="147.5" stroke="#ffffff" stroke-width="1" />
<text x="232" y="145" fill="#ffbf00" font-size="9.6" font-family='"Liberation Sans","Noto Sans CJK SC",sans-serif' text-anchor="start" >8</text>
<line x1="240.5" y1="147.5" x2="280" y2="250" stroke="#ffdf7f" stroke-width="1" />
<line x1="254" y1="147.5" x2="268" y2="147.5" stroke="#ffffff" stroke-width="1" />
<text x="260" y="145" fill="#ffbf00" font-size="9.6" font-family='"Liberation Sans","Noto Sans CJK SC",sans-serif' text-anchor="start" >7</text>
<line x1="267.5" y1="147.5" x2="299" y2="254" stroke="#ffdf7f" stroke-width="1" />
<line x1="282" y1="147.5" x2="295" y2="147.5" stroke="#ffffff" stroke-width="1" />
<text x="286.5" y="145" fill="#ffbf00" font-size="9.6" font-family='"Liberation Sans","Noto Sans CJK SC",sans-serif' text-anchor="start" >6</text>
<line x1="294.5" y1="147.5" x2="313" y2="251" stroke="#ffdf7f" stroke-width="1" />
<line x1="309" y1="147.5" x2="322" y2="147.5" stroke="#ffffff" stroke-width="1" />
<text x="313.5" y="145" fill="#ffbf00" font-size="9.6" font-family='"Liberation Sans","Noto Sans CJK SC",sans-serif' text-anchor="start" >5</text>
<line x1="321.5" y1="147.5" x2="332.5" y2="251" stroke="#ffdf7f" stroke-width="1" />
<line x1="336" y1="147.5" x2="349" y2="147.5" stroke="#ffffff" stroke-width="1" />
<text x="340.5" y="145" fill="#ffbf00" font-size="9.6" font-family='"Liberation Sans","Noto Sans CJK SC",sans-serif' text-anchor="start" >4</text>
<line x1="348.5" y1="147.5" x2="339.5" y2="264" stroke="#ffdf7f" stroke-width="1" />
<line x1="363" y1="147.5" x2="376" y2="147.5" stroke="#ffffff" stroke-width="1" />
<text x="367.5" y="145" fill="#ffbf00" font-size="9.6" font-family='"Liberation Sans","Noto Sans CJK SC",sans-serif' text-anchor="start" >3</text>
<line x1="375.5" y1="147.5" x2="358.5" y2="252.5" stroke="#ffdf7f" stroke-width="1" />
<line x1="390" y1="147.5" x2="403" y2="147.5" stroke="#ffffff" stroke-width="1" />
<text x="394.5" y="145" fill="#ffbf00" font-size="9.6" font-family='"Liberation Sans","Noto Sans CJK SC",sans-serif' text-anchor="start" >2</text>
<line x1="402.5" y1="147.5" x2="368" y2="259.5" stroke="#ffdf7f" stroke-width="1" />
<line x1="417" y1="147.5" x2="430" y2="147.5" stroke="#ffffff" stroke-width="1" />
<text x="421" y="145" fill="#ffbf00" font-size="9.6" font-family='"Liberation Sans","Noto Sans CJK SC",sans-serif' text-anchor="start" >1</text>
<line x1="429.5" y1="147.5" x2="379" y2="241" stroke="#ffdf7f" stroke-width="1" />
<line x1="131" y1="185.5" x2="145" y2="185.5" stroke="#ffffff" stroke-width="1" />
<text x="132.5" y="183" fill="#ffbf00" font-size="9.6" font-family='"Liberation Sans","Noto Sans CJK SC",sans-serif' text-anchor="start" >12</text>
<line x1="144.5" y1="185.5" x2="236" y2="253.5" stroke="#ffdf7f" stroke-width="1" />
<line x1="131" y1="243.5" x2="145" y2="243.5" stroke="#ffffff" stroke-width="1" />
<text x="132.5" y="241" fill="#ffbf00" font-size="9.6" font-family='"Liberation Sans","Noto Sans CJK SC",sans-serif' text-anchor="start" >13</text>
<line x1="144.5" y1="243.5" x2="207" y2="261.5" stroke="#ffdf7f" stroke-width="1" />
<line x1="131" y1="301.5" x2="145" y2="301.5" stroke="#ffffff" stroke-width="1" />
<text x="132.5" y="299" fill="#ffbf00" font-size="9.6" font-family='"Liberation Sans","Noto Sans CJK SC",sans-serif' text-anchor="start" >24</text>
<line x1="144.5" y1="301.5" x2="222" y2="280" stroke="#ffdf7f" stroke-width="1" />
<line x1="131" y1="360.5" x2="145" y2="360.5" stroke="#ffffff" stroke-width="1" />
<text x="132.5" y="358" fill="#ffbf00" font-size="9.6" font-family='"Liberation Sans","Noto Sans CJK SC",sans-serif' text-anchor="start" >23</text>
<line x1="144.5" y1="360.5" x2="223.5" y2="331.5" stroke="#ffdf7f" stroke-width="1" />
<line x1="432" y1="247.5" x2="447" y2="247.5" stroke="#ffffff" stroke-width="1" />
<text x="435.5" y="245.8" fill="#ffbf00" font-size="9.6" font-family='"Liberation Sans","Noto Sans CJK SC",sans-serif' text-anchor="start" >25</text>
<line x1="432" y1="247.5" x2="377" y2="267.5" stroke="#ffdf7f" stroke-width="1" />
<line x1="432" y1="291.5" x2="447" y2="291.5" stroke="#ffffff" stroke-width="1" />
<text x="435.5" y="289.8" fill="#ffbf00" font-size="9.6" font-family='"Liberation Sans","Noto Sans CJK SC",sans-serif' text-anchor="start" >26</text>
<line x1="432" y1="291.5" x2="350" y2="273.5" stroke="#ffdf7f" stroke-width="1" />
<line x1="432" y1="334.5" x2="447" y2="334.5" stroke="#ffffff" stroke-width="1" />
<text x="435.5" y="332.8" fill="#ffbf00" font-size="9.6" font-family='"Liberation Sans","Noto Sans CJK SC",sans-serif' text-anchor="start" >27</text>
<line x1="432" y1="334.5" x2="383" y2="299.5" stroke="#ffdf7f" stroke-width="1" />
<line x1="162" y1="448.5" x2="176" y2="448.5" stroke="#ffffff" stroke-width="1" />
<text x="164" y="446.8" fill="#ffbf00" font-size="9.6" font-family='"Liberation Sans","Noto Sans CJK SC",sans-serif' text-anchor="start" >22</text>
<line x1="175.5" y1="448.5" x2="235" y2="339" stroke="#ffdf7f" stroke-width="1" />
<line x1="195" y1="448.5" x2="208" y2="448.5" stroke="#ffffff" stroke-width="1" />
<text x="197.5" y="446.8" fill="#ffbf00" font-size="9.6" font-family='"Liberation Sans","Noto Sans CJK SC",sans-serif' text-anchor="start" >21</text>
<line x1="207.5" y1="448.5" x2="249" y2="354" stroke="#ffdf7f" stroke-width="1" />
<line x1="226" y1="448.5" x2="239" y2="448.5" stroke="#ffffff" stroke-width="1" />
<text x="229" y="446.8" fill="#ffbf00" font-size="9.6" font-family='"Liberation Sans","Noto Sans CJK SC",sans-serif' text-anchor="start" >20</text>
<line x1="238.5" y1="448.5" x2="262" y2="384" stroke="#ffdf7f" stroke-width="1" />
<line x1="259" y1="448.5" x2="273" y2="448.5" stroke="#ffffff" stroke-width="1" />
<text x="262" y="446.8" fill="#ffbf00" font-size="9.6" font-family='"Liberation Sans","Noto Sans CJK SC",sans-serif' text-anchor="start" >19</text>
<line x1="272.5" y1="448.5" x2="300" y2="335" stroke="#ffdf7f" stroke-width="1" />
<line x1="292" y1="448.5" x2="306" y2="448.5" stroke="#ffffff" stroke-width="1" />
<text x="295" y="446.8" fill="#ffbf00" font-size="9.6" font-family='"Liberation Sans","Noto Sans CJK SC",sans-serif' text-anchor="start" >18</text>
<line x1="306" y1="448.5" x2="315" y2="369" stroke="#ffdf7f" stroke-width="1" />
<line x1="325" y1="448.5" x2="338" y2="448.5" stroke="#ffffff" stroke-width="1" />
<text x="328" y="446.8" fill="#ffbf00" font-size="9.6" font-family='"Liberation Sans","Noto Sans CJK SC",sans-serif' text-anchor="start" >17</text>
<line x1="325" y1="448.5" x2="327.5" y2="369" stroke="#ffdf7f" stroke-width="1" />
<line x1="357" y1="448.5" x2="371" y2="448.5" stroke="#ffffff" stroke-width="1" />
<text x="360" y="446.8" fill="#ffbf00" font-size="9.6" font-family='"Liberation Sans","Noto Sans CJK SC",sans-serif' text-anchor="start" >16</text>
<line x1="357" y1="448.5" x2="343" y2="345" stroke="#ffdf7f" stroke-width="1" />
<line x1="390" y1="448.5" x2="403" y2="448.5" stroke="#ffffff" stroke-width="1" />
<text x="393" y="446.8" fill="#ffbf00" font-size="9.6" font-family='"Liberation Sans","Noto Sans CJK SC",sans-serif' text-anchor="start" >15</text>
<line x1="390" y1="448.5" x2="371" y2="324" stroke="#ffdf7f" stroke-width="1" />
<line x1="423" y1="448.5" x2="437" y2="448.5" stroke="#ffffff" stroke-width="1" />
<text x="426" y="446.8" fill="#ffbf00" font-size="9.6" font-family='"Liberation Sans","Noto Sans CJK SC",sans-serif' text-anchor="start" >14</text>
<line x1="423" y1="448.5" x2="385" y2="336" stroke="#ffdf7f" stroke-width="1" />
</g>
<g id="plan">
<rect x="574.5" y="235.5" width="212" height="170" fill="none" stroke="#ffffff" stroke-width="1"/>
<line x1="575" y1="245.5" x2="786" y2="245.5" stroke="#00ffaa" stroke-dasharray="3 2"/>
<rect x="575" y="272" width="211" height="2" fill="#00ffaa"/>
<rect x="575" y="368" width="211" height="2" fill="#00ffaa"/>
<line x1="575" y1="396.5" x2="787" y2="396.5" stroke="#00ffaa" stroke-width="1" />
<rect x="606.5" y="288.5" width="148" height="64" fill="none" stroke="#ffa500" stroke-width="1"/>
<circle cx="680.5" cy="320.5" r="9.5" fill="none" stroke="#fff"/>
<circle cx="589.5" cy="267.5" r="7" fill="none" stroke="#00ffaa" stroke-width="1.1" shape-rendering="geometricPrecision"/>
<circle cx="623.5" cy="267.5" r="7" fill="none" stroke="#00ffaa" stroke-width="1.1" shape-rendering="geometricPrecision"/>
<circle cx="642.5" cy="267.5" r="4.5" fill="none" stroke="#00ffaa" stroke-width="1.1" shape-rendering="geometricPrecision"/>
<circle cx="606.5" cy="259.5" r="4" fill="none" stroke="#00ffaa" stroke-width="1.1" shape-rendering="geometricPrecision"/>
<circle cx="589.5" cy="373.5" r="7" fill="none" stroke="#00ffaa" stroke-width="1.1" shape-rendering="geometricPrecision"/>
<circle cx="623.5" cy="373.5" r="7" fill="none" stroke="#00ffaa" stroke-width="1.1" shape-rendering="geometricPrecision"/>
<circle cx="642.5" cy="373.5" r="4.5" fill="none" stroke="#00ffaa" stroke-width="1.1" shape-rendering="geometricPrecision"/>
<circle cx="606.5" cy="382.5" r="4" fill="none" stroke="#00ffaa" stroke-width="1.1" shape-rendering="geometricPrecision"/>
<circle cx="580.5" cy="279.5" r="2.3" fill="none" stroke="#00ffaa" stroke-width="1.1" shape-rendering="geometricPrecision"/>
<circle cx="580.5" cy="361.5" r="2.3" fill="none" stroke="#00ffaa" stroke-width="1.1" shape-rendering="geometricPrecision"/>
<circle cx="589.5" cy="286.5" r="4.5" fill="none" stroke="#00ffaa" stroke-width="1.1" shape-rendering="geometricPrecision"/>
<circle cx="589.5" cy="354.5" r="4.5" fill="none" stroke="#00ffaa" stroke-width="1.1" shape-rendering="geometricPrecision"/>
<circle cx="771.5" cy="267.5" r="7" fill="none" stroke="#00ffaa" stroke-width="1.1" shape-rendering="geometricPrecision"/>
<circle cx="737.5" cy="267.5" r="7" fill="none" stroke="#00ffaa" stroke-width="1.1" shape-rendering="geometricPrecision"/>
<circle cx="718.5" cy="267.5" r="4.5" fill="none" stroke="#00ffaa" stroke-width="1.1" shape-rendering="geometricPrecision"/>
<circle cx="754.5" cy="259.5" r="4" fill="none" stroke="#00ffaa" stroke-width="1.1" shape-rendering="geometricPrecision"/>
<circle cx="771.5" cy="373.5" r="7" fill="none" stroke="#00ffaa" stroke-width="1.1" shape-rendering="geometricPrecision"/>
<circle cx="737.5" cy="373.5" r="7" fill="none" stroke="#00ffaa" stroke-width="1.1" shape-rendering="geometricPrecision"/>
<circle cx="718.5" cy="373.5" r="4.5" fill="none" stroke="#00ffaa" stroke-width="1.1" shape-rendering="geometricPrecision"/>
<circle cx="754.5" cy="382.5" r="4" fill="none" stroke="#00ffaa" stroke-width="1.1" shape-rendering="geometricPrecision"/>
<circle cx="780.5" cy="279.5" r="2.3" fill="none" stroke="#00ffaa" stroke-width="1.1" shape-rendering="geometricPrecision"/>
<circle cx="780.5" cy="361.5" r="2.3" fill="none" stroke="#00ffaa" stroke-width="1.1" shape-rendering="geometricPrecision"/>
<circle cx="771.5" cy="286.5" r="4.5" fill="none" stroke="#00ffaa" stroke-width="1.1" shape-rendering="geometricPrecision"/>
<circle cx="771.5" cy="354.5" r="4.5" fill="none" stroke="#00ffaa" stroke-width="1.1" shape-rendering="geometricPrecision"/>
<line x1="680.5" y1="226" x2="680.5" y2="415" stroke="#ff0000" stroke-width="1" />
<line x1="565" y1="320.5" x2="798" y2="320.5" stroke="#ff0000" stroke-width="1" />
<line x1="576" y1="267.5" x2="657" y2="267.5" stroke="#ff0000" stroke-width="1" />
<line x1="576" y1="373.5" x2="657" y2="373.5" stroke="#ff0000" stroke-width="1" />
<line x1="589.5" y1="253" x2="589.5" y2="296" stroke="#ff0000" stroke-width="1" />
<line x1="589.5" y1="346" x2="589.5" y2="390" stroke="#ff0000" stroke-width="1" />
<line x1="623.5" y1="256" x2="623.5" y2="279" stroke="#ff0000" stroke-width="1" />
<line x1="623.5" y1="362" x2="623.5" y2="386" stroke="#ff0000" stroke-width="1" />
<line x1="642.5" y1="262" x2="642.5" y2="275" stroke="#ff0000" stroke-width="1" />
<line x1="642.5" y1="367" x2="642.5" y2="381" stroke="#ff0000" stroke-width="1" />
<line x1="606.5" y1="254" x2="606.5" y2="265" stroke="#ff0000" stroke-width="1" />
<line x1="606.5" y1="377" x2="606.5" y2="388" stroke="#ff0000" stroke-width="1" />
<line x1="601" y1="259.5" x2="612" y2="259.5" stroke="#ff0000" stroke-width="1" />
<line x1="601" y1="382.5" x2="612" y2="382.5" stroke="#ff0000" stroke-width="1" />
<line x1="580.5" y1="275" x2="580.5" y2="285" stroke="#ff0000" stroke-width="1" />
<line x1="580.5" y1="357" x2="580.5" y2="367" stroke="#ff0000" stroke-width="1" />
<line x1="576" y1="279.5" x2="586" y2="279.5" stroke="#ff0000" stroke-width="1" />
<line x1="576" y1="361.5" x2="586" y2="361.5" stroke="#ff0000" stroke-width="1" />
<line x1="583" y1="286.5" x2="596" y2="286.5" stroke="#ff0000" stroke-width="1" />
<line x1="583" y1="354.5" x2="596" y2="354.5" stroke="#ff0000" stroke-width="1" />
<line x1="705" y1="267.5" x2="786" y2="267.5" stroke="#ff0000" stroke-width="1" />
<line x1="708" y1="373.5" x2="786" y2="373.5" stroke="#ff0000" stroke-width="1" />
<line x1="771.5" y1="253" x2="771.5" y2="296" stroke="#ff0000" stroke-width="1" />
<line x1="771.5" y1="346" x2="771.5" y2="390" stroke="#ff0000" stroke-width="1" />
<line x1="737.5" y1="256" x2="737.5" y2="279" stroke="#ff0000" stroke-width="1" />
<line x1="737.5" y1="362" x2="737.5" y2="386" stroke="#ff0000" stroke-width="1" />
<line x1="718.5" y1="262" x2="718.5" y2="275" stroke="#ff0000" stroke-width="1" />
<line x1="718.5" y1="367" x2="718.5" y2="381" stroke="#ff0000" stroke-width="1" />
<line x1="754.5" y1="254" x2="754.5" y2="265" stroke="#ff0000" stroke-width="1" />
<line x1="754.5" y1="377" x2="754.5" y2="388" stroke="#ff0000" stroke-width="1" />
<line x1="749" y1="259.5" x2="760" y2="259.5" stroke="#ff0000" stroke-width="1" />
<line x1="749" y1="382.5" x2="760" y2="382.5" stroke="#ff0000" stroke-width="1" />
<line x1="780.5" y1="275" x2="780.5" y2="285" stroke="#ff0000" stroke-width="1" />
<line x1="780.5" y1="357" x2="780.5" y2="367" stroke="#ff0000" stroke-width="1" />
<line x1="775" y1="279.5" x2="786" y2="279.5" stroke="#ff0000" stroke-width="1" />
<line x1="775" y1="361.5" x2="786" y2="361.5" stroke="#ff0000" stroke-width="1" />
<line x1="765" y1="286.5" x2="778" y2="286.5" stroke="#ff0000" stroke-width="1" />
<line x1="765" y1="354.5" x2="778" y2="354.5" stroke="#ff0000" stroke-width="1" />
<line x1="580" y1="147.5" x2="781" y2="147.5" stroke="#0080ff" stroke-width="1" />
<rect x="581" y="146" width="3" height="3" fill="#0080ff"/>
<rect x="777" y="146" width="3" height="3" fill="#0080ff"/>
<text x="680.5" y="146.5" fill="#0080ff" font-size="10" font-family='"Liberation Sans","Noto Sans CJK SC",sans-serif' text-anchor="middle" >470</text>
<line x1="589" y1="164.5" x2="772" y2="164.5" stroke="#0080ff" stroke-width="1" />
<rect x="590" y="163" width="3" height="3" fill="#0080ff"/>
<rect x="768" y="163" width="3" height="3" fill="#0080ff"/>
<text x="680.5" y="163.5" fill="#0080ff" font-size="10" font-family='"Liberation Sans","Noto Sans CJK SC",sans-serif' text-anchor="middle" >430</text>
<line x1="606" y1="183.5" x2="755" y2="183.5" stroke="#0080ff" stroke-width="1" />
<rect x="607" y="182" width="3" height="3" fill="#0080ff"/>
<rect x="751" y="182" width="3" height="3" fill="#0080ff"/>
<text x="680.5" y="182.5" fill="#0080ff" font-size="10" font-family='"Liberation Sans","Noto Sans CJK SC",sans-serif' text-anchor="middle" >350</text>
<line x1="623" y1="201.5" x2="738" y2="201.5" stroke="#0080ff" stroke-width="1" />
<rect x="624" y="200" width="3" height="3" fill="#0080ff"/>
<rect x="734" y="200" width="3" height="3" fill="#0080ff"/>
<text x="680.5" y="200.5" fill="#0080ff" font-size="10" font-family='"Liberation Sans","Noto Sans CJK SC",sans-serif' text-anchor="middle" >270</text>
<line x1="642" y1="218.5" x2="719" y2="218.5" stroke="#0080ff" stroke-width="1" />
<rect x="643" y="217" width="3" height="3" fill="#0080ff"/>
<rect x="715" y="217" width="3" height="3" fill="#0080ff"/>
<text x="680.5" y="217.5" fill="#0080ff" font-size="10" font-family='"Liberation Sans","Noto Sans CJK SC",sans-serif' text-anchor="middle" >178</text>
<line x1="580.5" y1="145" x2="580.5" y2="279" stroke="#0080ff" stroke-width="1" />
<line x1="780.5" y1="145" x2="780.5" y2="279" stroke="#0080ff" stroke-width="1" />
<line x1="589.5" y1="162" x2="589.5" y2="253" stroke="#0080ff" stroke-width="1" />
<line x1="771.5" y1="162" x2="771.5" y2="253" stroke="#0080ff" stroke-width="1" />
<line x1="606.5" y1="181" x2="606.5" y2="255" stroke="#0080ff" stroke-width="1" />
<line x1="754.5" y1="181" x2="754.5" y2="255" stroke="#0080ff" stroke-width="1" />
<line x1="623.5" y1="199" x2="623.5" y2="256" stroke="#0080ff" stroke-width="1" />
<line x1="737.5" y1="199" x2="737.5" y2="256" stroke="#0080ff" stroke-width="1" />
<line x1="642.5" y1="216" x2="642.5" y2="262" stroke="#0080ff" stroke-width="1" />
<line x1="718.5" y1="216" x2="718.5" y2="262" stroke="#0080ff" stroke-width="1" />
<line x1="574" y1="430.5" x2="787" y2="430.5" stroke="#0080ff" stroke-width="1" />
<line x1="574.5" y1="406" x2="574.5" y2="434" stroke="#0080ff" stroke-width="1" />
<line x1="786.5" y1="406" x2="786.5" y2="434" stroke="#0080ff" stroke-width="1" />
<rect x="575" y="429" width="3" height="3" fill="#0080ff"/>
<rect x="783" y="429" width="3" height="3" fill="#0080ff"/>
<text x="680.5" y="429.5" fill="#0080ff" font-size="10" font-family='"Liberation Sans","Noto Sans CJK SC",sans-serif' text-anchor="middle" >500</text>
<line x1="500.5" y1="259" x2="500.5" y2="383" stroke="#0080ff" stroke-width="1" />
<line x1="497" y1="259.5" x2="603" y2="259.5" stroke="#0080ff" stroke-width="1" />
<line x1="497" y1="382.5" x2="584" y2="382.5" stroke="#0080ff" stroke-width="1" />
<rect x="499" y="260" width="3" height="3" fill="#0080ff"/>
<rect x="499" y="379" width="3" height="3" fill="#0080ff"/>
<text transform="translate(499.5,321) rotate(-90)" fill="#0080ff" font-size="10" font-family='"Liberation Sans",sans-serif' text-anchor="middle">290</text>
<line x1="518.5" y1="267" x2="518.5" y2="374" stroke="#0080ff" stroke-width="1" />
<line x1="515" y1="267.5" x2="612" y2="267.5" stroke="#0080ff" stroke-width="1" />
<line x1="515" y1="373.5" x2="612" y2="373.5" stroke="#0080ff" stroke-width="1" />
<rect x="517" y="268" width="3" height="3" fill="#0080ff"/>
<rect x="517" y="370" width="3" height="3" fill="#0080ff"/>
<text transform="translate(517.5,321) rotate(-90)" fill="#0080ff" font-size="10" font-family='"Liberation Sans",sans-serif' text-anchor="middle">250</text>
<line x1="536.5" y1="279" x2="536.5" y2="362" stroke="#0080ff" stroke-width="1" />
<line x1="533" y1="279.5" x2="579" y2="279.5" stroke="#0080ff" stroke-width="1" />
<line x1="533" y1="361.5" x2="579" y2="361.5" stroke="#0080ff" stroke-width="1" />
<rect x="535" y="280" width="3" height="3" fill="#0080ff"/>
<rect x="535" y="358" width="3" height="3" fill="#0080ff"/>
<text transform="translate(535.5,321) rotate(-90)" fill="#0080ff" font-size="10" font-family='"Liberation Sans",sans-serif' text-anchor="middle">194</text>
<line x1="553.5" y1="286" x2="553.5" y2="355" stroke="#0080ff" stroke-width="1" />
<line x1="550" y1="286.5" x2="585" y2="286.5" stroke="#0080ff" stroke-width="1" />
<line x1="550" y1="354.5" x2="585" y2="354.5" stroke="#0080ff" stroke-width="1" />
<rect x="552" y="287" width="3" height="3" fill="#0080ff"/>
<rect x="552" y="351" width="3" height="3" fill="#0080ff"/>
<text transform="translate(552.5,321) rotate(-90)" fill="#0080ff" font-size="10" font-family='"Liberation Sans",sans-serif' text-anchor="middle">160</text>
<line x1="787" y1="235.5" x2="859" y2="235.5" stroke="#0080ff" stroke-width="1" />
<line x1="787" y1="245.5" x2="838" y2="245.5" stroke="#0080ff" stroke-width="1" />
<rect x="787" y="272" width="30" height="2" fill="#0080ff"/>
<rect x="787" y="368" width="30" height="2" fill="#0080ff"/>
<line x1="787" y1="396.5" x2="838" y2="396.5" stroke="#0080ff" stroke-width="1" />
<line x1="787" y1="405.5" x2="859" y2="405.5" stroke="#0080ff" stroke-width="1" />
<line x1="814.5" y1="245" x2="814.5" y2="397" stroke="#0080ff" stroke-width="1" />
<line x1="834.5" y1="245" x2="834.5" y2="397" stroke="#0080ff" stroke-width="1" />
<line x1="855.5" y1="235" x2="855.5" y2="406" stroke="#0080ff" stroke-width="1" />
<rect x="813" y="247" width="3" height="3" fill="#0080ff"/>
<rect x="813" y="270" width="3" height="3" fill="#0080ff"/>
<rect x="813" y="275" width="3" height="3" fill="#0080ff"/>
<rect x="813" y="366" width="3" height="3" fill="#0080ff"/>
<rect x="813" y="371" width="3" height="3" fill="#0080ff"/>
<rect x="813" y="393" width="3" height="3" fill="#0080ff"/>
<rect x="833" y="247" width="3" height="3" fill="#0080ff"/>
<rect x="833" y="393" width="3" height="3" fill="#0080ff"/>
<rect x="854" y="237" width="3" height="3" fill="#0080ff"/>
<rect x="854" y="402" width="3" height="3" fill="#0080ff"/>
<text transform="translate(812.5,259) rotate(-90)" fill="#0080ff" font-size="10" font-family='"Liberation Sans",sans-serif' text-anchor="middle">63</text>
<text transform="translate(812.5,321) rotate(-90)" fill="#0080ff" font-size="10" font-family='"Liberation Sans",sans-serif' text-anchor="middle">224</text>
<text transform="translate(832.5,321) rotate(-90)" fill="#0080ff" font-size="10" font-family='"Liberation Sans",sans-serif' text-anchor="middle">355</text>
<text transform="translate(853.5,321) rotate(-90)" fill="#0080ff" font-size="10" font-family='"Liberation Sans",sans-serif' text-anchor="middle">400</text>
<text transform="translate(812.5,383) rotate(-90)" fill="#0080ff" font-size="10" font-family='"Liberation Sans",sans-serif' text-anchor="middle">63</text>
</g>
<g id="bowl">
<text x="806" y="76.5" fill="#0080ff" font-size="9.5" font-family='"Liberation Sans","Noto Sans CJK SC",sans-serif' text-anchor="middle" >1:2</text>
<line x1="785" y1="78.5" x2="825" y2="78.5" stroke="#0080ff" stroke-width="1" />
<text x="804" y="90" fill="#0080ff" font-size="8" font-family='"Liberation Sans","Noto Sans CJK SC",sans-serif' text-anchor="middle" letter-spacing="0.3">制品简图</text>
<rect x="855" y="105" width="106" height="55" fill="url(#BOWL)" clip-path="url(#bowlclip)"/>
<use href="#bowlshape" fill="none" stroke="#fff"/>
<line x1="859" y1="108.5" x2="958" y2="108.5" stroke="#ffffff" stroke-width="1" />
<line x1="908.5" y1="104" x2="908.5" y2="157" stroke="#ff0000" stroke-width="1" />
<line x1="859" y1="81.5" x2="958" y2="81.5" stroke="#0080ff" stroke-width="1" />
<line x1="859.5" y1="79" x2="859.5" y2="108" stroke="#0080ff" stroke-width="1" />
<line x1="957.5" y1="79" x2="957.5" y2="108" stroke="#0080ff" stroke-width="1" />
<rect x="860" y="80" width="4" height="3" fill="#0080ff"/>
<rect x="953" y="80" width="4" height="3" fill="#0080ff"/>
<text x="908" y="80" fill="#0080ff" font-size="10" font-family='"Liberation Sans","Noto Sans CJK SC",sans-serif' text-anchor="middle" >ϕ115</text>
<line x1="837.5" y1="108" x2="837.5" y2="157" stroke="#0080ff" stroke-width="1" />
<line x1="834" y1="108.5" x2="859" y2="108.5" stroke="#0080ff" stroke-width="1" />
<line x1="834" y1="156.5" x2="885" y2="156.5" stroke="#0080ff" stroke-width="1" />
<rect x="836" y="110" width="3" height="3" fill="#0080ff"/>
<rect x="836" y="152" width="3" height="3" fill="#0080ff"/>
<text transform="translate(836,132.5) rotate(-90)" fill="#0080ff" font-size="10" font-family='"Liberation Sans",sans-serif' text-anchor="middle">57</text>
<line x1="855.5" y1="144" x2="855.5" y2="166" stroke="#0080ff" stroke-width="1" />
<line x1="852" y1="153.5" x2="885" y2="153.5" stroke="#0080ff" stroke-width="1" />
<text x="856" y="143.5" fill="#0080ff" font-size="9" font-family='"Liberation Sans","Noto Sans CJK SC",sans-serif' text-anchor="start" >4</text>
<line x1="855" y1="144.5" x2="860" y2="144.5" stroke="#0080ff" stroke-width="1" />
<line x1="888.5" y1="157" x2="888.5" y2="184" stroke="#0080ff" stroke-width="1" />
<line x1="928.5" y1="157" x2="928.5" y2="184" stroke="#0080ff" stroke-width="1" />
<line x1="888" y1="180.5" x2="929" y2="180.5" stroke="#0080ff" stroke-width="1" />
<rect x="889" y="179" width="3" height="3" fill="#0080ff"/>
<rect x="925" y="179" width="3" height="3" fill="#0080ff"/>
<text x="908.5" y="179.5" fill="#0080ff" font-size="10" font-family='"Liberation Sans","Noto Sans CJK SC",sans-serif' text-anchor="middle" >ϕ47</text>
<line x1="885.5" y1="157" x2="885.5" y2="197" stroke="#0080ff" stroke-width="1" />
<line x1="931.5" y1="157" x2="931.5" y2="197" stroke="#0080ff" stroke-width="1" />
<line x1="885" y1="193.5" x2="932" y2="193.5" stroke="#0080ff" stroke-width="1" />
<rect x="886" y="192" width="3" height="3" fill="#0080ff"/>
<rect x="928" y="192" width="3" height="3" fill="#0080ff"/>
<text x="908.5" y="192" fill="#0080ff" font-size="10" font-family='"Liberation Sans","Noto Sans CJK SC",sans-serif' text-anchor="middle" >ϕ55</text>
<text x="884" y="98.5" fill="#0080ff" font-size="10" font-family='"Liberation Sans","Noto Sans CJK SC",sans-serif' text-anchor="start" >R50</text>
<line x1="884" y1="99.5" x2="902" y2="99.5" stroke="#0080ff" stroke-width="1" />
<line x1="901.5" y1="99.5" x2="936.5" y2="138.5" stroke="#0080ff" stroke-width="1" />
<text x="933" y="98.5" fill="#0080ff" font-size="10" font-family='"Liberation Sans","Noto Sans CJK SC",sans-serif' text-anchor="start" >R3</text>
<line x1="933" y1="99.5" x2="945" y2="99.5" stroke="#0080ff" stroke-width="1" />
<line x1="944.5" y1="99.5" x2="952.5" y2="108" stroke="#0080ff" stroke-width="1" />
<text x="967" y="124.5" fill="#0080ff" font-size="10" font-family='"Liberation Sans","Noto Sans CJK SC",sans-serif' text-anchor="start" >R2</text>
<line x1="963" y1="125.5" x2="979" y2="125.5" stroke="#0080ff" stroke-width="1" />
<line x1="963.5" y1="125.5" x2="953" y2="110.5" stroke="#0080ff" stroke-width="1" />
<text x="948.5" y="156.5" fill="#0080ff" font-size="10" font-family='"Liberation Sans","Noto Sans CJK SC",sans-serif' text-anchor="start" >R4</text>
<line x1="945" y1="157.5" x2="960" y2="157.5" stroke="#0080ff" stroke-width="1" />
<line x1="945" y1="157.5" x2="933" y2="147" stroke="#0080ff" stroke-width="1" />
<text x="901" y="167" fill="#0080ff" font-size="10" font-family='"Liberation Sans","Noto Sans CJK SC",sans-serif' text-anchor="start" >R3</text>
<line x1="898" y1="167.5" x2="912" y2="167.5" stroke="#0080ff" stroke-width="1" />
<line x1="898.5" y1="167.5" x2="890" y2="153.5" stroke="#0080ff" stroke-width="1" />
</g>
<g id="table">
<line x1="390" y1="495.5" x2="697" y2="495.5" stroke="#ffd966" stroke-width="1" />
<line x1="390" y1="507.5" x2="697" y2="507.5" stroke="#ffd966" stroke-width="1" />
<line x1="390" y1="519.5" x2="697" y2="519.5" stroke="#ffd966" stroke-width="1" />
<line x1="390" y1="531.5" x2="697" y2="531.5" stroke="#ffd966" stroke-width="1" />
<line x1="390" y1="543.5" x2="697" y2="543.5" stroke="#ffd966" stroke-width="1" />
<line x1="390" y1="554.5" x2="697" y2="554.5" stroke="#ffd966" stroke-width="1" />
<line x1="390" y1="566.5" x2="697" y2="566.5" stroke="#ffd966" stroke-width="1" />
<line x1="390" y1="578.5" x2="697" y2="578.5" stroke="#ffd966" stroke-width="1" />
<line x1="390" y1="590.5" x2="697" y2="590.5" stroke="#ffd966" stroke-width="1" />
<line x1="390" y1="602.5" x2="697" y2="602.5" stroke="#ffd966" stroke-width="1" />
<line x1="390" y1="614.5" x2="697" y2="614.5" stroke="#ffd966" stroke-width="1" />
<line x1="390" y1="626.5" x2="697" y2="626.5" stroke="#ffd966" stroke-width="1" />
<line x1="390" y1="638.5" x2="697" y2="638.5" stroke="#ffd966" stroke-width="1" />
<line x1="390" y1="650.5" x2="697" y2="650.5" stroke="#ffd966" stroke-width="1" />
<line x1="390" y1="662.5" x2="697" y2="662.5" stroke="#ffd966" stroke-width="1" />
<line x1="390" y1="673.5" x2="697" y2="673.5" stroke="#ffd966" stroke-width="1" />
<line x1="390" y1="685.5" x2="697" y2="685.5" stroke="#ffd966" stroke-width="1" />
<line x1="390" y1="697.5" x2="697" y2="697.5" stroke="#ffd966" stroke-width="1" />
<line x1="390" y1="709.5" x2="697" y2="709.5" stroke="#ffd966" stroke-width="1" />
<line x1="390" y1="721.5" x2="697" y2="721.5" stroke="#ffd966" stroke-width="1" />
<line x1="390.5" y1="495" x2="390.5" y2="722" stroke="#ffd966" stroke-width="1" />
<line x1="407.5" y1="495" x2="407.5" y2="722" stroke="#ffd966" stroke-width="1" />
<line x1="476.5" y1="495" x2="476.5" y2="722" stroke="#ffd966" stroke-width="1" />
<line x1="491.5" y1="495" x2="491.5" y2="722" stroke="#ffd966" stroke-width="1" />
<line x1="547.5" y1="495" x2="547.5" y2="722" stroke="#ffd966" stroke-width="1" />
<line x1="632.5" y1="495" x2="632.5" y2="722" stroke="#ffd966" stroke-width="1" />
<line x1="696.5" y1="495" x2="696.5" y2="722" stroke="#fff3cc" stroke-width="1" />
<line x1="696" y1="495.5" x2="1003" y2="495.5" stroke="#ffd966" stroke-width="1" />
<line x1="696" y1="507.5" x2="1003" y2="507.5" stroke="#ffd966" stroke-width="1" />
<line x1="696" y1="519.5" x2="1003" y2="519.5" stroke="#ffd966" stroke-width="1" />
<line x1="696" y1="531.5" x2="1003" y2="531.5" stroke="#ffd966" stroke-width="1" />
<line x1="696" y1="543.5" x2="1003" y2="543.5" stroke="#ffd966" stroke-width="1" />
<line x1="696" y1="554.5" x2="1003" y2="554.5" stroke="#ffd966" stroke-width="1" />
<line x1="696" y1="566.5" x2="1003" y2="566.5" stroke="#ffd966" stroke-width="1" />
<line x1="696" y1="578.5" x2="1003" y2="578.5" stroke="#ffd966" stroke-width="1" />
<line x1="696" y1="590.5" x2="1003" y2="590.5" stroke="#ffd966" stroke-width="1" />
<line x1="696" y1="602.5" x2="1003" y2="602.5" stroke="#ffffff" stroke-width="1" />
<line x1="696" y1="626.5" x2="1003" y2="626.5" stroke="#ffffff" stroke-width="1" />
<line x1="713.5" y1="495" x2="713.5" y2="627" stroke="#ffd966" stroke-width="1" />
<line x1="783.5" y1="495" x2="783.5" y2="627" stroke="#ffd966" stroke-width="1" />
<line x1="796.5" y1="495" x2="796.5" y2="627" stroke="#ffd966" stroke-width="1" />
<line x1="853.5" y1="495" x2="853.5" y2="627" stroke="#ffd966" stroke-width="1" />
<line x1="937.5" y1="495" x2="937.5" y2="627" stroke="#ffd966" stroke-width="1" />
<line x1="713" y1="543.5" x2="1003" y2="543.5" stroke="#ffa500" stroke-width="1" />
<line x1="713" y1="590.5" x2="1003" y2="590.5" stroke="#ffa500" stroke-width="1" />
<text x="391.5" y="516.5" fill="#ffbf00" font-size="10.5" font-family='"Liberation Sans","Noto Sans CJK SC",sans-serif' text-anchor="start"  textLength="14.5" lengthAdjust="spacingAndGlyphs">27</text>
<text x="416.5" y="517.5" fill="#ffbf00" font-size="9" font-family='"Liberation Sans","Noto Sans CJK SC",sans-serif' text-anchor="start" font-weight="400" textLength="17.5" lengthAdjust="spacing">螺钉</text>
<text x="485" y="517" fill="#ffbf00" font-size="10.5" font-family='"Liberation Sans","Noto Sans CJK SC",sans-serif' text-anchor="middle" >2</text>
<text x="504" y="517.5" fill="#ffbf00" font-size="10.5" font-family='"Liberation Sans","Noto Sans CJK SC",sans-serif' text-anchor="start"  textLength="12.8" lengthAdjust="spacingAndGlyphs">45</text>
<text x="641" y="517.5" fill="#ffbf00" font-size="10.5" font-family='"Liberation Sans","Noto Sans CJK SC",sans-serif' text-anchor="start"  textLength="18.9" lengthAdjust="spacingAndGlyphs">ϕ10</text>
<text x="391.5" y="528.5" fill="#ffbf00" font-size="10.5" font-family='"Liberation Sans","Noto Sans CJK SC",sans-serif' text-anchor="start"  textLength="14.5" lengthAdjust="spacingAndGlyphs">26</text>
<text x="416.5" y="529.5" fill="#ffbf00" font-size="9" font-family='"Liberation Sans","Noto Sans CJK SC",sans-serif' text-anchor="start" font-weight="400" textLength="17.5" lengthAdjust="spacing">弹簧</text>
<text x="485" y="529" fill="#ffbf00" font-size="10.5" font-family='"Liberation Sans","Noto Sans CJK SC",sans-serif' text-anchor="middle" >4</text>
<text x="504" y="529.5" fill="#ffbf00" font-size="10.5" font-family='"Liberation Sans","Noto Sans CJK SC",sans-serif' text-anchor="start"  textLength="25.6" lengthAdjust="spacingAndGlyphs">65Mn</text>
<text x="391.5" y="540.5" fill="#ffbf00" font-size="10.5" font-family='"Liberation Sans","Noto Sans CJK SC",sans-serif' text-anchor="start"  textLength="14.5" lengthAdjust="spacingAndGlyphs">25</text>
<text x="416.5" y="541.5" fill="#ffbf00" font-size="9" font-family='"Liberation Sans","Noto Sans CJK SC",sans-serif' text-anchor="start" font-weight="400" textLength="17.5" lengthAdjust="spacing">推销</text>
<text x="485" y="541" fill="#ffbf00" font-size="10.5" font-family='"Liberation Sans","Noto Sans CJK SC",sans-serif' text-anchor="middle" >4</text>
<text x="504" y="541.5" fill="#ffbf00" font-size="10.5" font-family='"Liberation Sans","Noto Sans CJK SC",sans-serif' text-anchor="start"  textLength="12.8" lengthAdjust="spacingAndGlyphs">A₃</text>
<text x="641" y="541.5" fill="#ffbf00" font-size="10.5" font-family='"Liberation Sans","Noto Sans CJK SC",sans-serif' text-anchor="start"  textLength="18.9" lengthAdjust="spacingAndGlyphs">ϕ20</text>
<text x="391.5" y="551.5" fill="#ffbf00" font-size="10.5" font-family='"Liberation Sans","Noto Sans CJK SC",sans-serif' text-anchor="start"  textLength="14.5" lengthAdjust="spacingAndGlyphs">24</text>
<text x="416.5" y="552.5" fill="#ffbf00" font-size="9" font-family='"Liberation Sans","Noto Sans CJK SC",sans-serif' text-anchor="start" font-weight="400" textLength="17.5" lengthAdjust="spacing">螺钉</text>
<text x="485" y="552" fill="#ffbf00" font-size="10.5" font-family='"Liberation Sans","Noto Sans CJK SC",sans-serif' text-anchor="middle" >4</text>
<text x="504" y="552.5" fill="#ffbf00" font-size="10.5" font-family='"Liberation Sans","Noto Sans CJK SC",sans-serif' text-anchor="start"  textLength="12.8" lengthAdjust="spacingAndGlyphs">45</text>
<text x="641" y="552.5" fill="#ffbf00" font-size="10.5" font-family='"Liberation Sans","Noto Sans CJK SC",sans-serif' text-anchor="start"  textLength="18.9" lengthAdjust="spacingAndGlyphs">ϕ10</text>
<text x="391.5" y="563.5" fill="#ffbf00" font-size="10.5" font-family='"Liberation Sans","Noto Sans CJK SC",sans-serif' text-anchor="start"  textLength="14.5" lengthAdjust="spacingAndGlyphs">23</text>
<text x="416.5" y="564.5" fill="#ffbf00" font-size="9" font-family='"Liberation Sans","Noto Sans CJK SC",sans-serif' text-anchor="start" font-weight="400" textLength="48.5" lengthAdjust="spacing">顶杆固定板</text>
<text x="485" y="564" fill="#ffbf00" font-size="10.5" font-family='"Liberation Sans","Noto Sans CJK SC",sans-serif' text-anchor="middle" >1</text>
<text x="504" y="564.5" fill="#ffbf00" font-size="10.5" font-family='"Liberation Sans","Noto Sans CJK SC",sans-serif' text-anchor="start"  textLength="12.8" lengthAdjust="spacingAndGlyphs">A₃</text>
<text x="391.5" y="575.5" fill="#ffbf00" font-size="10.5" font-family='"Liberation Sans","Noto Sans CJK SC",sans-serif' text-anchor="start"  textLength="14.5" lengthAdjust="spacingAndGlyphs">22</text>
<text x="416.5" y="576.5" fill="#ffbf00" font-size="9" font-family='"Liberation Sans","Noto Sans CJK SC",sans-serif' text-anchor="start" font-weight="400" textLength="17.5" lengthAdjust="spacing">推板</text>
<text x="485" y="576" fill="#ffbf00" font-size="10.5" font-family='"Liberation Sans","Noto Sans CJK SC",sans-serif' text-anchor="middle" >1</text>
<text x="504" y="576.5" fill="#ffbf00" font-size="10.5" font-family='"Liberation Sans","Noto Sans CJK SC",sans-serif' text-anchor="start"  textLength="12.8" lengthAdjust="spacingAndGlyphs">45</text>
<text x="391.5" y="587.5" fill="#ffbf00" font-size="10.5" font-family='"Liberation Sans","Noto Sans CJK SC",sans-serif' text-anchor="start"  textLength="14.5" lengthAdjust="spacingAndGlyphs">21</text>
<text x="416.5" y="588.5" fill="#ffbf00" font-size="9" font-family='"Liberation Sans","Noto Sans CJK SC",sans-serif' text-anchor="start" font-weight="400" textLength="17.5" lengthAdjust="spacing">推杆</text>
<text x="485" y="588" fill="#ffbf00" font-size="10.5" font-family='"Liberation Sans","Noto Sans CJK SC",sans-serif' text-anchor="middle" >1</text>
<text x="504" y="588.5" fill="#ffbf00" font-size="10.5" font-family='"Liberation Sans","Noto Sans CJK SC",sans-serif' text-anchor="start"  textLength="19.2" lengthAdjust="spacingAndGlyphs">T8A</text>
<text x="549.5" y="588.5" fill="#ffbf00" font-size="10.5" font-family='"Liberation Sans","Noto Sans CJK SC",sans-serif' text-anchor="start"  textLength="96.75" lengthAdjust="spacingAndGlyphs">GB/T4169.1-1984</text>
<text x="391.5" y="599.5" fill="#ffbf00" font-size="10.5" font-family='"Liberation Sans","Noto Sans CJK SC",sans-serif' text-anchor="start"  textLength="14.5" lengthAdjust="spacingAndGlyphs">20</text>
<text x="416.5" y="600.5" fill="#ffbf00" font-size="9" font-family='"Liberation Sans","Noto Sans CJK SC",sans-serif' text-anchor="start" font-weight="400" textLength="17.5" lengthAdjust="spacing">螺钉</text>
<text x="485" y="600" fill="#ffbf00" font-size="10.5" font-family='"Liberation Sans","Noto Sans CJK SC",sans-serif' text-anchor="middle" >4</text>
<text x="504" y="600.5" fill="#ffbf00" font-size="10.5" font-family='"Liberation Sans","Noto Sans CJK SC",sans-serif' text-anchor="start"  textLength="12.8" lengthAdjust="spacingAndGlyphs">45</text>
<text x="641" y="600.5" fill="#ffbf00" font-size="10.5" font-family='"Liberation Sans","Noto Sans CJK SC",sans-serif' text-anchor="start"  textLength="18.9" lengthAdjust="spacingAndGlyphs">ϕ20</text>
<text x="391.5" y="611.5" fill="#ffbf00" font-size="10.5" font-family='"Liberation Sans","Noto Sans CJK SC",sans-serif' text-anchor="start"  textLength="14.5" lengthAdjust="spacingAndGlyphs">19</text>
<text x="416.5" y="612.5" fill="#ffbf00" font-size="9" font-family='"Liberation Sans","Noto Sans CJK SC",sans-serif' text-anchor="start" font-weight="400" textLength="17.5" lengthAdjust="spacing">型芯</text>
<text x="485" y="612" fill="#ffbf00" font-size="10.5" font-family='"Liberation Sans","Noto Sans CJK SC",sans-serif' text-anchor="middle" >2</text>
<text x="504" y="612.5" fill="#ffbf00" font-size="10.5" font-family='"Liberation Sans","Noto Sans CJK SC",sans-serif' text-anchor="start"  textLength="48.5" lengthAdjust="spacingAndGlyphs">20CrMnTi</text>
<text x="391.5" y="623.5" fill="#ffbf00" font-size="10.5" font-family='"Liberation Sans","Noto Sans CJK SC",sans-serif' text-anchor="start"  textLength="14.5" lengthAdjust="spacingAndGlyphs">18</text>
<text x="416.5" y="624.5" fill="#ffbf00" font-size="9" font-family='"Liberation Sans","Noto Sans CJK SC",sans-serif' text-anchor="start" font-weight="400" textLength="17.5" lengthAdjust="spacing">导柱</text>
<text x="485" y="624" fill="#ffbf00" font-size="10.5" font-family='"Liberation Sans","Noto Sans CJK SC",sans-serif' text-anchor="middle" >4</text>
<text x="504" y="624.5" fill="#ffbf00" font-size="10.5" font-family='"Liberation Sans","Noto Sans CJK SC",sans-serif' text-anchor="start"  textLength="12.8" lengthAdjust="spacingAndGlyphs">20</text>
<text x="549.5" y="624.5" fill="#ffbf00" font-size="10.5" font-family='"Liberation Sans","Noto Sans CJK SC",sans-serif' text-anchor="start"  textLength="83.85" lengthAdjust="spacingAndGlyphs">GB4169.4-1984</text>
<text x="391.5" y="635.5" fill="#ffbf00" font-size="10.5" font-family='"Liberation Sans","Noto Sans CJK SC",sans-serif' text-anchor="start"  textLength="14.5" lengthAdjust="spacingAndGlyphs">17</text>
<text x="416.5" y="636.5" fill="#ffbf00" font-size="9" font-family='"Liberation Sans","Noto Sans CJK SC",sans-serif' text-anchor="start" font-weight="400" textLength="17.5" lengthAdjust="spacing">导套</text>
<text x="485" y="636" fill="#ffbf00" font-size="10.5" font-family='"Liberation Sans","Noto Sans CJK SC",sans-serif' text-anchor="middle" >4</text>
<text x="504" y="636.5" fill="#ffbf00" font-size="10.5" font-family='"Liberation Sans","Noto Sans CJK SC",sans-serif' text-anchor="start"  textLength="19.2" lengthAdjust="spacingAndGlyphs">T8A</text>
<text x="549.5" y="636.5" fill="#ffbf00" font-size="10.5" font-family='"Liberation Sans","Noto Sans CJK SC",sans-serif' text-anchor="start"  textLength="83.85" lengthAdjust="spacingAndGlyphs">GB/T1184-1996</text>
<text x="391.5" y="647.5" fill="#ffbf00" font-size="10.5" font-family='"Liberation Sans","Noto Sans CJK SC",sans-serif' text-anchor="start"  textLength="14.5" lengthAdjust="spacingAndGlyphs">16</text>
<text x="416.5" y="648.5" fill="#ffbf00" font-size="9" font-family='"Liberation Sans","Noto Sans CJK SC",sans-serif' text-anchor="start" font-weight="400" textLength="17.5" lengthAdjust="spacing">凹模</text>
<text x="485" y="648" fill="#ffbf00" font-size="10.5" font-family='"Liberation Sans","Noto Sans CJK SC",sans-serif' text-anchor="middle" >1</text>
<text x="504" y="648.5" fill="#ffbf00" font-size="10.5" font-family='"Liberation Sans","Noto Sans CJK SC",sans-serif' text-anchor="start"  textLength="48.5" lengthAdjust="spacingAndGlyphs">20CrMnTi</text>
<text x="391.5" y="659.5" fill="#ffbf00" font-size="10.5" font-family='"Liberation Sans","Noto Sans CJK SC",sans-serif' text-anchor="start"  textLength="14.5" lengthAdjust="spacingAndGlyphs">15</text>
<text x="416.5" y="660.5" fill="#ffbf00" font-size="9" font-family='"Liberation Sans","Noto Sans CJK SC",sans-serif' text-anchor="start" font-weight="400" textLength="28.5" lengthAdjust="spacing">浇道口</text>
<text x="485" y="660" fill="#ffbf00" font-size="10.5" font-family='"Liberation Sans","Noto Sans CJK SC",sans-serif' text-anchor="middle" >1</text>
<text x="504" y="660.5" fill="#ffbf00" font-size="10.5" font-family='"Liberation Sans","Noto Sans CJK SC",sans-serif' text-anchor="start"  textLength="19.2" lengthAdjust="spacingAndGlyphs">T8A</text>
<text x="391.5" y="670.5" fill="#ffbf00" font-size="10.5" font-family='"Liberation Sans","Noto Sans CJK SC",sans-serif' text-anchor="start"  textLength="14.5" lengthAdjust="spacingAndGlyphs">14</text>
<text x="416.5" y="671.5" fill="#ffbf00" font-size="9" font-family='"Liberation Sans","Noto Sans CJK SC",sans-serif' text-anchor="start" font-weight="400" textLength="28.5" lengthAdjust="spacing">定位圈</text>
<text x="485" y="671" fill="#ffbf00" font-size="10.5" font-family='"Liberation Sans","Noto Sans CJK SC",sans-serif' text-anchor="middle" >1</text>
<text x="504" y="671.5" fill="#ffbf00" font-size="10.5" font-family='"Liberation Sans","Noto Sans CJK SC",sans-serif' text-anchor="start"  textLength="12.8" lengthAdjust="spacingAndGlyphs">45</text>
<text x="394" y="682.5" fill="#ffbf00" font-size="10.5" font-family='"Liberation Sans","Noto Sans CJK SC",sans-serif' text-anchor="start"  textLength="14.5" lengthAdjust="spacingAndGlyphs">13</text>
<text x="416.5" y="683.5" fill="#ffbf00" font-size="9" font-family='"Liberation Sans","Noto Sans CJK SC",sans-serif' text-anchor="start" font-weight="400" textLength="38" lengthAdjust="spacing">动模座板</text>
<text x="485" y="683" fill="#ffbf00" font-size="10.5" font-family='"Liberation Sans","Noto Sans CJK SC",sans-serif' text-anchor="middle" >1</text>
<text x="504" y="683.5" fill="#ffbf00" font-size="10.5" font-family='"Liberation Sans","Noto Sans CJK SC",sans-serif' text-anchor="start"  textLength="12.8" lengthAdjust="spacingAndGlyphs">45</text>
<text x="549.5" y="683.5" fill="#ffbf00" font-size="10.5" font-family='"Liberation Sans","Noto Sans CJK SC",sans-serif' text-anchor="start"  textLength="103.2" lengthAdjust="spacingAndGlyphs">GB/T12556.1-1990</text>
<text x="394" y="694.5" fill="#ffbf00" font-size="10.5" font-family='"Liberation Sans","Noto Sans CJK SC",sans-serif' text-anchor="start"  textLength="14.5" lengthAdjust="spacingAndGlyphs">12</text>
<text x="416.5" y="695.5" fill="#ffbf00" font-size="9" font-family='"Liberation Sans","Noto Sans CJK SC",sans-serif' text-anchor="start" font-weight="400" textLength="17.5" lengthAdjust="spacing">垫块</text>
<text x="485" y="695" fill="#ffbf00" font-size="10.5" font-family='"Liberation Sans","Noto Sans CJK SC",sans-serif' text-anchor="middle" >2</text>
<text x="504" y="695.5" fill="#ffbf00" font-size="10.5" font-family='"Liberation Sans","Noto Sans CJK SC",sans-serif' text-anchor="start"  textLength="12.8" lengthAdjust="spacingAndGlyphs">A₃</text>
<text x="549.5" y="694" fill="#ffbf00" font-size="10.5" font-family='"Liberation Sans","Noto Sans CJK SC",sans-serif' text-anchor="start"  textLength="103.2" lengthAdjust="spacingAndGlyphs">GB/T12556.1-1990</text>
<text x="394" y="706.5" fill="#ffbf00" font-size="10.5" font-family='"Liberation Sans","Noto Sans CJK SC",sans-serif' text-anchor="start"  textLength="14.5" lengthAdjust="spacingAndGlyphs">11</text>
<text x="416.5" y="707.5" fill="#ffbf00" font-size="9" font-family='"Liberation Sans","Noto Sans CJK SC",sans-serif' text-anchor="start" font-weight="400" textLength="38.5" lengthAdjust="spacing">弹簧垫圈</text>
<text x="485" y="707" fill="#ffbf00" font-size="10.5" font-family='"Liberation Sans","Noto Sans CJK SC",sans-serif' text-anchor="middle" >4</text>
<text x="504" y="707.5" fill="#ffbf00" font-size="10.5" font-family='"Liberation Sans","Noto Sans CJK SC",sans-serif' text-anchor="start"  textLength="25.6" lengthAdjust="spacingAndGlyphs">65Mn</text>
<text x="555" y="707.5" fill="#ffbf00" font-size="10.5" font-family='"Liberation Sans","Noto Sans CJK SC",sans-serif' text-anchor="start"  textLength="61" lengthAdjust="spacingAndGlyphs">GB/T93-87</text>
<text x="636" y="707.5" fill="#ffbf00" font-size="10.5" font-family='"Liberation Sans","Noto Sans CJK SC",sans-serif' text-anchor="start"  textLength="31.5" lengthAdjust="spacingAndGlyphs">ϕ10.2</text>
<text x="394" y="718.5" fill="#ffbf00" font-size="10.5" font-family='"Liberation Sans","Noto Sans CJK SC",sans-serif' text-anchor="start"  textLength="14.5" lengthAdjust="spacingAndGlyphs">10</text>
<text x="416.5" y="719.5" fill="#ffbf00" font-size="9" font-family='"Liberation Sans","Noto Sans CJK SC",sans-serif' text-anchor="start" font-weight="400" textLength="17.5" lengthAdjust="spacing">垫圈</text>
<text x="485" y="719" fill="#ffbf00" font-size="10.5" font-family='"Liberation Sans","Noto Sans CJK SC",sans-serif' text-anchor="middle" >4</text>
<text x="504" y="719.5" fill="#ffbf00" font-size="10.5" font-family='"Liberation Sans","Noto Sans CJK SC",sans-serif' text-anchor="start"  textLength="12.8" lengthAdjust="spacingAndGlyphs">45</text>
<text x="555" y="719.5" fill="#ffbf00" font-size="10.5" font-family='"Liberation Sans","Noto Sans CJK SC",sans-serif' text-anchor="start"  textLength="61" lengthAdjust="spacingAndGlyphs">GB/T95-85</text>
<text x="636" y="719.5" fill="#ffbf00" font-size="10.5" font-family='"Liberation Sans","Noto Sans CJK SC",sans-serif' text-anchor="start"  textLength="18.9" lengthAdjust="spacingAndGlyphs">ϕ32</text>
<text x="706" y="505" fill="#ffbf00" font-size="10.5" font-family='"Liberation Sans","Noto Sans CJK SC",sans-serif' text-anchor="middle" >9</text>
<text x="722" y="505.5" fill="#ffbf00" font-size="9" font-family='"Liberation Sans","Noto Sans CJK SC",sans-serif' text-anchor="start" font-weight="400" textLength="40" lengthAdjust="spacing">限位螺钉</text>
<text x="791" y="505" fill="#ffbf00" font-size="10.5" font-family='"Liberation Sans","Noto Sans CJK SC",sans-serif' text-anchor="middle" >4</text>
<text x="810.5" y="505.5" fill="#ffbf00" font-size="10.5" font-family='"Liberation Sans","Noto Sans CJK SC",sans-serif' text-anchor="start"  textLength="12.6" lengthAdjust="spacingAndGlyphs">45</text>
<text x="706" y="517" fill="#ffbf00" font-size="10.5" font-family='"Liberation Sans","Noto Sans CJK SC",sans-serif' text-anchor="middle" >8</text>
<text x="722" y="517.5" fill="#ffbf00" font-size="9" font-family='"Liberation Sans","Noto Sans CJK SC",sans-serif' text-anchor="start" font-weight="400" textLength="29" lengthAdjust="spacing">支承板</text>
<text x="791" y="517" fill="#ffbf00" font-size="10.5" font-family='"Liberation Sans","Noto Sans CJK SC",sans-serif' text-anchor="middle" >1</text>
<text x="810.5" y="517.5" fill="#ffbf00" font-size="10.5" font-family='"Liberation Sans","Noto Sans CJK SC",sans-serif' text-anchor="start"  textLength="12.6" lengthAdjust="spacingAndGlyphs">45</text>
<text x="854.5" y="516" fill="#ffbf00" font-size="10.5" font-family='"Liberation Sans","Noto Sans CJK SC",sans-serif' text-anchor="start"  textLength="102.5" lengthAdjust="spacingAndGlyphs">GB/T12556.1-1990</text>
<text x="706" y="529" fill="#ffbf00" font-size="10.5" font-family='"Liberation Sans","Noto Sans CJK SC",sans-serif' text-anchor="middle" >7</text>
<text x="722" y="529.5" fill="#ffbf00" font-size="9" font-family='"Liberation Sans","Noto Sans CJK SC",sans-serif' text-anchor="start" font-weight="400" textLength="29" lengthAdjust="spacing">固定板</text>
<text x="791" y="529" fill="#ffbf00" font-size="10.5" font-family='"Liberation Sans","Noto Sans CJK SC",sans-serif' text-anchor="middle" >1</text>
<text x="810.5" y="529.5" fill="#ffbf00" font-size="10.5" font-family='"Liberation Sans","Noto Sans CJK SC",sans-serif' text-anchor="start"  textLength="12.6" lengthAdjust="spacingAndGlyphs">45</text>
<text x="706" y="541" fill="#ffbf00" font-size="10.5" font-family='"Liberation Sans","Noto Sans CJK SC",sans-serif' text-anchor="middle" >6</text>
<text x="722" y="541.5" fill="#ffbf00" font-size="9" font-family='"Liberation Sans","Noto Sans CJK SC",sans-serif' text-anchor="start" font-weight="400" textLength="18" lengthAdjust="spacing">顶板</text>
<text x="791" y="541" fill="#ffbf00" font-size="10.5" font-family='"Liberation Sans","Noto Sans CJK SC",sans-serif' text-anchor="middle" >1</text>
<text x="810.5" y="541.5" fill="#ffbf00" font-size="10.5" font-family='"Liberation Sans","Noto Sans CJK SC",sans-serif' text-anchor="start"  textLength="12.6" lengthAdjust="spacingAndGlyphs">45</text>
<text x="706" y="552" fill="#ffbf00" font-size="10.5" font-family='"Liberation Sans","Noto Sans CJK SC",sans-serif' text-anchor="middle" >5</text>
<text x="722" y="552.5" fill="#ffbf00" font-size="9" font-family='"Liberation Sans","Noto Sans CJK SC",sans-serif' text-anchor="start" font-weight="400" textLength="29" lengthAdjust="spacing">定模板</text>
<text x="791" y="552" fill="#ffbf00" font-size="10.5" font-family='"Liberation Sans","Noto Sans CJK SC",sans-serif' text-anchor="middle" >1</text>
<text x="810.5" y="552.5" fill="#ffbf00" font-size="10.5" font-family='"Liberation Sans","Noto Sans CJK SC",sans-serif' text-anchor="start"  textLength="12.6" lengthAdjust="spacingAndGlyphs">45</text>
<text x="854.5" y="551.5" fill="#ffbf00" font-size="10.5" font-family='"Liberation Sans","Noto Sans CJK SC",sans-serif' text-anchor="start"  textLength="102.5" lengthAdjust="spacingAndGlyphs">GB/T12556.1-1990</text>
<text x="944" y="552.5" fill="#ffbf00" font-size="10.5" font-family='"Liberation Sans","Noto Sans CJK SC",sans-serif' text-anchor="start"  textLength="45.5" lengthAdjust="spacingAndGlyphs">500x355</text>
<text x="706" y="564" fill="#ffbf00" font-size="10.5" font-family='"Liberation Sans","Noto Sans CJK SC",sans-serif' text-anchor="middle" >4</text>
<text x="722" y="564.5" fill="#ffbf00" font-size="9" font-family='"Liberation Sans","Noto Sans CJK SC",sans-serif' text-anchor="start" font-weight="400" textLength="40" lengthAdjust="spacing">定距导柱</text>
<text x="791" y="564" fill="#ffbf00" font-size="10.5" font-family='"Liberation Sans","Noto Sans CJK SC",sans-serif' text-anchor="middle" >4</text>
<text x="810.5" y="564.5" fill="#ffbf00" font-size="10.5" font-family='"Liberation Sans","Noto Sans CJK SC",sans-serif' text-anchor="start"  textLength="18.9" lengthAdjust="spacingAndGlyphs">T8A</text>
<text x="706" y="576" fill="#ffbf00" font-size="10.5" font-family='"Liberation Sans","Noto Sans CJK SC",sans-serif' text-anchor="middle" >3</text>
<text x="722" y="576.5" fill="#ffbf00" font-size="9" font-family='"Liberation Sans","Noto Sans CJK SC",sans-serif' text-anchor="start" font-weight="400" textLength="29" lengthAdjust="spacing">脱浇板</text>
<text x="791" y="576" fill="#ffbf00" font-size="10.5" font-family='"Liberation Sans","Noto Sans CJK SC",sans-serif' text-anchor="middle" >1</text>
<text x="810.5" y="576.5" fill="#ffbf00" font-size="10.5" font-family='"Liberation Sans","Noto Sans CJK SC",sans-serif' text-anchor="start"  textLength="12.6" lengthAdjust="spacingAndGlyphs">45</text>
<text x="944" y="576.5" fill="#ffbf00" font-size="10.5" font-family='"Liberation Sans","Noto Sans CJK SC",sans-serif' text-anchor="start"  textLength="45.5" lengthAdjust="spacingAndGlyphs">500x355</text>
<text x="706" y="588" fill="#ffbf00" font-size="10.5" font-family='"Liberation Sans","Noto Sans CJK SC",sans-serif' text-anchor="middle" >2</text>
<text x="722" y="588.5" fill="#ffbf00" font-size="9" font-family='"Liberation Sans","Noto Sans CJK SC",sans-serif' text-anchor="start" font-weight="400" textLength="18" lengthAdjust="spacing">导套</text>
<text x="791" y="588" fill="#ffbf00" font-size="10.5" font-family='"Liberation Sans","Noto Sans CJK SC",sans-serif' text-anchor="middle" >4</text>
<text x="810.5" y="588.5" fill="#ffbf00" font-size="10.5" font-family='"Liberation Sans","Noto Sans CJK SC",sans-serif' text-anchor="start"  textLength="18.9" lengthAdjust="spacingAndGlyphs">T8A</text>
<text x="706" y="600" fill="#ffbf00" font-size="10.5" font-family='"Liberation Sans","Noto Sans CJK SC",sans-serif' text-anchor="middle" >1</text>
<text x="722" y="600.5" fill="#ffbf00" font-size="9" font-family='"Liberation Sans","Noto Sans CJK SC",sans-serif' text-anchor="start" font-weight="400" textLength="40" lengthAdjust="spacing">定模座板</text>
<text x="791" y="600" fill="#ffbf00" font-size="10.5" font-family='"Liberation Sans","Noto Sans CJK SC",sans-serif' text-anchor="middle" >1</text>
<text x="810.5" y="600.5" fill="#ffbf00" font-size="10.5" font-family='"Liberation Sans","Noto Sans CJK SC",sans-serif' text-anchor="start"  textLength="12.6" lengthAdjust="spacingAndGlyphs">45</text>
<text x="854.5" y="599.5" fill="#ffbf00" font-size="10.5" font-family='"Liberation Sans","Noto Sans CJK SC",sans-serif' text-anchor="start"  textLength="102.5" lengthAdjust="spacingAndGlyphs">GB/T12556.1-1990</text>
<text x="944" y="600.5" fill="#ffbf00" font-size="10.5" font-family='"Liberation Sans","Noto Sans CJK SC",sans-serif' text-anchor="start"  textLength="45.5" lengthAdjust="spacingAndGlyphs">500x400</text>
<text x="700.5" y="613.5" fill="#ffbf00" font-size="7.5" font-family='"Liberation Sans","Noto Sans CJK SC",sans-serif' text-anchor="start" font-weight="400">序</text>
<text x="700.5" y="623.5" fill="#ffbf00" font-size="7.5" font-family='"Liberation Sans","Noto Sans CJK SC",sans-serif' text-anchor="start" font-weight="400">号</text>
<text x="732" y="619" fill="#ffbf00" font-size="7.5" font-family='"Liberation Sans","Noto Sans CJK SC",sans-serif' text-anchor="start" font-weight="400">名</text>
<text x="751.5" y="619" fill="#ffbf00" font-size="7.5" font-family='"Liberation Sans","Noto Sans CJK SC",sans-serif' text-anchor="start" font-weight="400">称</text>
<text x="786" y="613.5" fill="#ffbf00" font-size="7.5" font-family='"Liberation Sans","Noto Sans CJK SC",sans-serif' text-anchor="start" font-weight="400">数</text>
<text x="786" y="623.5" fill="#ffbf00" font-size="7.5" font-family='"Liberation Sans","Noto Sans CJK SC",sans-serif' text-anchor="start" font-weight="400">量</text>
<text x="812.5" y="619" fill="#ffbf00" font-size="7.5" font-family='"Liberation Sans","Noto Sans CJK SC",sans-serif' text-anchor="start" font-weight="400">材</text>
<text x="831.5" y="619" fill="#ffbf00" font-size="7.5" font-family='"Liberation Sans","Noto Sans CJK SC",sans-serif' text-anchor="start" font-weight="400">料</text>
<text x="882" y="619" fill="#ffbf00" font-size="7.5" font-family='"Liberation Sans","Noto Sans CJK SC",sans-serif' text-anchor="start" font-weight="400">标</text>
<text x="906.5" y="619" fill="#ffbf00" font-size="7.5" font-family='"Liberation Sans","Noto Sans CJK SC",sans-serif' text-anchor="start" font-weight="400">准</text>
<text x="955.5" y="619" fill="#ffbf00" font-size="7.5" font-family='"Liberation Sans","Noto Sans CJK SC",sans-serif' text-anchor="start" font-weight="400">备</text>
<text x="974" y="619" fill="#ffbf00" font-size="7.5" font-family='"Liberation Sans","Noto Sans CJK SC",sans-serif' text-anchor="start" font-weight="400">注</text>
<line x1="696" y1="638.5" x2="832" y2="638.5" stroke="#ffd966" stroke-width="1" />
<line x1="696" y1="650.5" x2="832" y2="650.5" stroke="#ffd966" stroke-width="1" />
<line x1="696" y1="661.5" x2="832" y2="661.5" stroke="#ffd966" stroke-width="1" />
<line x1="696" y1="673.5" x2="832" y2="673.5" stroke="#ffd966" stroke-width="1" />
<line x1="696" y1="685.5" x2="832" y2="685.5" stroke="#ffd966" stroke-width="1" />
<line x1="696" y1="697.5" x2="832" y2="697.5" stroke="#ffd966" stroke-width="1" />
<line x1="696" y1="709.5" x2="832" y2="709.5" stroke="#ffd966" stroke-width="1" />
<line x1="713.5" y1="626" x2="713.5" y2="674" stroke="#ffd966" stroke-width="1" />
<line x1="730.5" y1="626" x2="730.5" y2="674" stroke="#ffd966" stroke-width="1" />
<line x1="747.5" y1="626" x2="747.5" y2="674" stroke="#ffd966" stroke-width="1" />
<line x1="715.5" y1="673" x2="715.5" y2="722" stroke="#ffd966" stroke-width="1" />
<line x1="742.5" y1="673" x2="742.5" y2="722" stroke="#ffd966" stroke-width="1" />
<line x1="764.5" y1="673" x2="764.5" y2="722" stroke="#ffd966" stroke-width="1" />
<line x1="784.5" y1="626" x2="784.5" y2="722" stroke="#ffd966" stroke-width="1" />
<line x1="804.5" y1="626" x2="804.5" y2="722" stroke="#ffd966" stroke-width="1" />
<line x1="696.5" y1="602" x2="696.5" y2="722" stroke="#ffffff" stroke-width="1" />
<line x1="831.5" y1="626" x2="831.5" y2="722" stroke="#ffffff" stroke-width="1" />
<line x1="915.5" y1="626" x2="915.5" y2="722" stroke="#ffffff" stroke-width="1" />
<line x1="915" y1="657.5" x2="1003" y2="657.5" stroke="#ffffff" stroke-width="1" />
<line x1="831" y1="690.5" x2="1003" y2="690.5" stroke="#ffffff" stroke-width="1" />
<line x1="831" y1="705.5" x2="916" y2="705.5" stroke="#ffffff" stroke-width="1" />
<line x1="831" y1="673.5" x2="916" y2="673.5" stroke="#ffd966" stroke-width="1" />
<line x1="875.5" y1="673" x2="875.5" y2="706" stroke="#ffd966" stroke-width="1" />
<line x1="893.5" y1="673" x2="893.5" y2="706" stroke="#ffd966" stroke-width="1" />
<line x1="842.5" y1="690" x2="842.5" y2="706" stroke="#ffd966" stroke-width="1" />
<line x1="853.5" y1="690" x2="853.5" y2="706" stroke="#ffd966" stroke-width="1" />
<line x1="864.5" y1="690" x2="864.5" y2="706" stroke="#ffd966" stroke-width="1" />
<text x="698.5" y="672" fill="#ffbf00" font-size="8.5" font-family='"Liberation Sans","Noto Sans CJK SC",sans-serif' text-anchor="start" font-weight="700" textLength="13" lengthAdjust="spacingAndGlyphs">标记</text>
<text x="715" y="672" fill="#ffbf00" font-size="8.5" font-family='"Liberation Sans","Noto Sans CJK SC",sans-serif' text-anchor="start" font-weight="700" textLength="13.5" lengthAdjust="spacingAndGlyphs">处数</text>
<text x="732.5" y="672" fill="#ffbf00" font-size="8.5" font-family='"Liberation Sans","Noto Sans CJK SC",sans-serif' text-anchor="start" font-weight="700" textLength="12" lengthAdjust="spacingAndGlyphs">分区</text>
<text x="748.5" y="672" fill="#ffbf00" font-size="8.5" font-family='"Liberation Sans","Noto Sans CJK SC",sans-serif' text-anchor="start" font-weight="700" textLength="30.5" lengthAdjust="spacingAndGlyphs">更改文件号</text>
<text x="787.5" y="672" fill="#ffbf00" font-size="8.5" font-family='"Liberation Sans","Noto Sans CJK SC",sans-serif' text-anchor="start" font-weight="700" textLength="12" lengthAdjust="spacingAndGlyphs">签名</text>
<text x="808" y="672" fill="#ffbf00" font-size="8.5" font-family='"Liberation Sans","Noto Sans CJK SC",sans-serif' text-anchor="start" font-weight="700" textLength="17.5" lengthAdjust="spacingAndGlyphs">年月日</text>
<text x="700.5" y="684" fill="#ffbf00" font-size="8.5" font-family='"Liberation Sans","Noto Sans CJK SC",sans-serif' text-anchor="start" font-weight="700" textLength="12" lengthAdjust="spacingAndGlyphs">设计</text>
<text x="700.5" y="696" fill="#ffbf00" font-size="8.5" font-family='"Liberation Sans","Noto Sans CJK SC",sans-serif' text-anchor="start" font-weight="700" textLength="12" lengthAdjust="spacingAndGlyphs">绘图</text>
<text x="700.5" y="708" fill="#ffbf00" font-size="8.5" font-family='"Liberation Sans","Noto Sans CJK SC",sans-serif' text-anchor="start" font-weight="700" textLength="12" lengthAdjust="spacingAndGlyphs">审核</text>
<text x="700.5" y="720" fill="#ffbf00" font-size="8.5" font-family='"Liberation Sans","Noto Sans CJK SC",sans-serif' text-anchor="start" font-weight="700" textLength="12" lengthAdjust="spacingAndGlyphs">工艺</text>
<text x="718.5" y="684" fill="#d9a300" font-size="7.5" font-family='"Liberation Sans","Noto Sans CJK SC",sans-serif' text-anchor="start" font-weight="400" textLength="21" lengthAdjust="spacing">吴杰成</text>
<text x="718.5" y="696" fill="#d9a300" font-size="7.5" font-family='"Liberation Sans","Noto Sans CJK SC",sans-serif' text-anchor="start" font-weight="400" textLength="21" lengthAdjust="spacing">吴杰成</text>
<text x="718.5" y="708" fill="#d9a300" font-size="7.5" font-family='"Liberation Sans","Noto Sans CJK SC",sans-serif' text-anchor="start" font-weight="400" textLength="21" lengthAdjust="spacing">曾老师</text>
<text x="718.5" y="720" fill="#d9a300" font-size="7.5" font-family='"Liberation Sans","Noto Sans CJK SC",sans-serif' text-anchor="start" font-weight="400" textLength="21" lengthAdjust="spacing">吴杰成</text>
<text x="745" y="683.5" fill="#ffbf00" font-size="9" font-family='"Liberation Sans","Noto Sans CJK SC",sans-serif' text-anchor="start"  textLength="19.5" lengthAdjust="spacingAndGlyphs">12.12</text>
<text x="745" y="695.5" fill="#ffbf00" font-size="9" font-family='"Liberation Sans","Noto Sans CJK SC",sans-serif' text-anchor="start"  textLength="19.5" lengthAdjust="spacingAndGlyphs">12.12</text>
<text x="745" y="719.5" fill="#ffbf00" font-size="9" font-family='"Liberation Sans","Noto Sans CJK SC",sans-serif' text-anchor="start"  textLength="19.5" lengthAdjust="spacingAndGlyphs">12.12</text>
<text x="765.5" y="684" fill="#ffbf00" font-size="8.5" font-family='"Liberation Sans","Noto Sans CJK SC",sans-serif' text-anchor="start" font-weight="700" textLength="17.5" lengthAdjust="spacingAndGlyphs">标准化</text>
<text x="768.5" y="720" fill="#ffbf00" font-size="8.5" font-family='"Liberation Sans","Noto Sans CJK SC",sans-serif' text-anchor="start" font-weight="700" textLength="12" lengthAdjust="spacingAndGlyphs">批准</text>
<text x="853.5" y="656" fill="#ffbf00" font-size="15.5" font-family='"Liberation Sans","Noto Sans CJK SC",sans-serif' text-anchor="start"  textLength="25" lengthAdjust="spacingAndGlyphs">???</text>
<text x="842" y="688" fill="#ffbf00" font-size="8.5" font-family='"Liberation Sans","Noto Sans CJK SC",sans-serif' text-anchor="start" font-weight="700" textLength="24.5" lengthAdjust="spacingAndGlyphs">阶段标记</text>
<text x="878" y="688" fill="#ffbf00" font-size="8.5" font-family='"Liberation Sans","Noto Sans CJK SC",sans-serif' text-anchor="start" font-weight="700" textLength="12.5" lengthAdjust="spacingAndGlyphs">数量</text>
<text x="898.5" y="688" fill="#ffbf00" font-size="8.5" font-family='"Liberation Sans","Noto Sans CJK SC",sans-serif' text-anchor="start" font-weight="700" textLength="12.5" lengthAdjust="spacingAndGlyphs">比例</text>
<text x="834" y="702" fill="#ffbf00" font-size="8.5" font-family='"Liberation Sans","Noto Sans CJK SC",sans-serif' text-anchor="start"  textLength="6" lengthAdjust="spacingAndGlyphs">S</text>
<text x="846" y="702" fill="#ffbf00" font-size="8.5" font-family='"Liberation Sans","Noto Sans CJK SC",sans-serif' text-anchor="start"  textLength="6" lengthAdjust="spacingAndGlyphs">A</text>
<text x="879" y="702" fill="#ffbf00" font-size="8.5" font-family='"Liberation Sans","Noto Sans CJK SC",sans-serif' text-anchor="start"  textLength="3.5" lengthAdjust="spacingAndGlyphs">1</text>
<text x="883.5" y="702" fill="#ffbf00" font-size="7.5" font-family='"Liberation Sans","Noto Sans CJK SC",sans-serif' text-anchor="start" font-weight="400">件</text>
<text x="900.5" y="702" fill="#ffbf00" font-size="8.5" font-family='"Liberation Sans","Noto Sans CJK SC",sans-serif' text-anchor="start"  textLength="13.5" lengthAdjust="spacingAndGlyphs">1:4</text>
<text x="840.5" y="718.5" fill="#ffbf00" font-size="8.5" font-family='"Liberation Sans","Noto Sans CJK SC",sans-serif' text-anchor="start" font-weight="700" textLength="7" lengthAdjust="spacingAndGlyphs">共</text>
<text x="861.5" y="718.5" fill="#ffbf00" font-size="8.5" font-family='"Liberation Sans","Noto Sans CJK SC",sans-serif' text-anchor="start" font-weight="700" textLength="7" lengthAdjust="spacingAndGlyphs">张</text>
<text x="876" y="718.5" fill="#ffbf00" font-size="8.5" font-family='"Liberation Sans","Noto Sans CJK SC",sans-serif' text-anchor="start" font-weight="700" textLength="7" lengthAdjust="spacingAndGlyphs">第</text>
<text x="898" y="718.5" fill="#ffbf00" font-size="8.5" font-family='"Liberation Sans","Noto Sans CJK SC",sans-serif' text-anchor="start" font-weight="700" textLength="7" lengthAdjust="spacingAndGlyphs">张</text>
<text x="928" y="648" fill="#ffe6b3" font-size="15" font-family='"Liberation Sans","Noto Sans CJK SC",sans-serif' text-anchor="start" textLength="59.5" lengthAdjust="spacing">湖南工院</text>
<text x="928" y="678" fill="#ffbf00" font-size="12.5" font-family='"Liberation Sans","Noto Sans CJK SC",sans-serif' text-anchor="start"  textLength="49.5" lengthAdjust="spacingAndGlyphs">PP??????</text>
<text x="953" y="710.5" fill="#ffbf00" font-size="11.5" font-family='"Liberation Sans","Noto Sans CJK SC",sans-serif' text-anchor="start"  textLength="29" lengthAdjust="spacingAndGlyphs">00-01</text>
</g>
<g id="note">
<text x="180" y="556.8" fill="#ffbf00" font-size="8.3" font-family='"Liberation Sans","Noto Sans CJK SC",sans-serif' text-anchor="start" font-weight="500" textLength="16" lengthAdjust="spacing">说明</text>
<text x="158.5" y="577.3" fill="#ffbf00" font-size="8.3" font-family='"Liberation Sans","Noto Sans CJK SC",sans-serif' text-anchor="start" font-weight="500" textLength="129" lengthAdjust="spacing">选用GB/T12556.1-1990标准中</text>
<text x="141.5" y="587.8" fill="#ffbf00" font-size="8.3" font-family='"Liberation Sans","Noto Sans CJK SC",sans-serif' text-anchor="start" font-weight="500" textLength="145" lengthAdjust="spacing">的355x500模架,此模具为日常用品碗</text>
<text x="141.5" y="599" fill="#ffbf00" font-size="8.3" font-family='"Liberation Sans","Noto Sans CJK SC",sans-serif' text-anchor="start" font-weight="500" textLength="151" lengthAdjust="spacing">的壳体注射模,在卧式注射机上使用,采用</text>
<text x="141.5" y="610" fill="#ffbf00" font-size="8.3" font-family='"Liberation Sans","Noto Sans CJK SC",sans-serif' text-anchor="start" font-weight="500" textLength="151" lengthAdjust="spacing">点式浇口,位置选择在工作的底部,不影响</text>
<text x="141.5" y="621" fill="#ffbf00" font-size="8.3" font-family='"Liberation Sans","Noto Sans CJK SC",sans-serif' text-anchor="start" font-weight="500" textLength="151" lengthAdjust="spacing">工作的外观,进料和排气都较合理,开模时</text>
<text x="141.5" y="632.3" fill="#ffbf00" font-size="8.3" font-family='"Liberation Sans","Noto Sans CJK SC",sans-serif' text-anchor="start" font-weight="500" textLength="62" lengthAdjust="spacing">工件被顶板推出.</text>
</g>
</svg></body></html>
